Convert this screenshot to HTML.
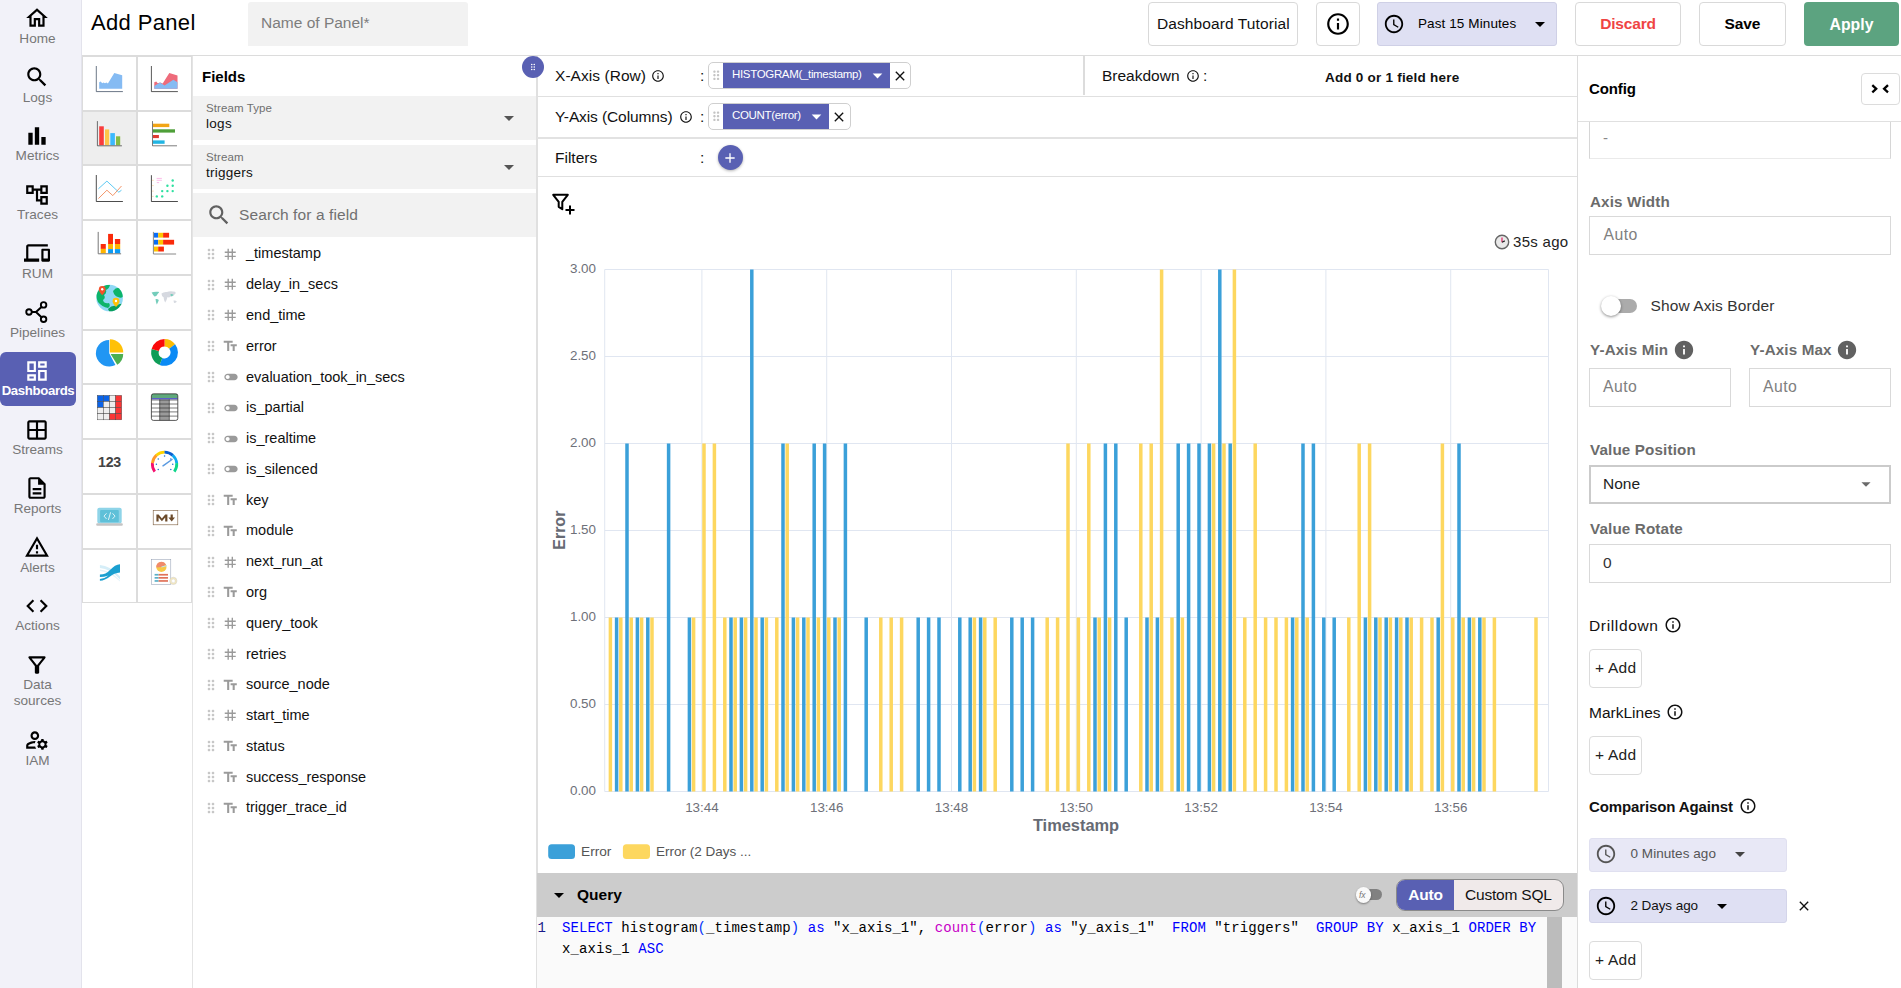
<!DOCTYPE html>
<html lang="en">
<head>
<meta charset="utf-8">
<title>Add Panel</title>
<style>
*{box-sizing:border-box;margin:0;padding:0}
html,body{width:1901px;height:988px;overflow:hidden;background:#fff}
body{font-family:"Liberation Sans",sans-serif;color:#000;position:relative;font-size:14px}
.abs{position:absolute}
svg{display:block}
.t{position:absolute;white-space:nowrap;line-height:1}

/* sidebar */
#side{position:absolute;left:0;top:0;width:82px;height:988px;background:#f2f2f9;border-right:1px solid #e3e3ec}
.nav{position:absolute;left:0;width:76px;text-align:center;color:#7a7a7a;font-size:14.5px;line-height:17px}
.nav svg{position:absolute;left:25px;top:0;width:24px;height:24px;fill:#000}
.nav .lb{position:absolute;left:0;width:75px;top:24px;text-align:center}
.nav.act{background:#5960b2;border-radius:0 8px 8px 0;color:#fff;font-weight:bold}
.nav.act svg{fill:#fff}

/* header */
#hdr{position:absolute;left:82px;top:0;width:1819px;height:56px;border-bottom:1px solid #dcdcdc;background:#fff}
.btn{position:absolute;border:1px solid #d9d9d9;border-radius:4px;background:#fff;text-align:center;white-space:nowrap}

/* chart types */
#ctypes{position:absolute;left:82px;top:56px;width:111px;height:932px;border-right:2px solid #e0e0e0}
.ct{position:absolute;width:55px;height:55px;border:1px solid #dcdcdc;background:#fff}
.ct svg{position:absolute;left:13px;top:13px;width:28px;height:28px}

/* fields */
#fields{position:absolute;left:193px;top:56px;width:343px;height:932px;background:#fff}
.sel{position:absolute;left:0;width:343px;height:44px;background:#f2f2f2}
.sel .l1{position:absolute;left:13px;top:6px;font-size:11.5px;color:#757575;line-height:12px}
.sel .l2{position:absolute;left:13px;top:21px;font-size:13.5px;color:#111;line-height:15px}
.fr{position:absolute;left:0;width:343px;height:20px}
.fr .nm{position:absolute;left:52px;top:2px;font-size:14px;line-height:16px;color:#111;white-space:nowrap;letter-spacing:.1px}
.fr svg{position:absolute}

/* main */
#main{position:absolute;left:537px;top:56px;width:1041px;height:932px;border-left:1px solid #e0e0e0}

/* config */
#cfg{position:absolute;left:1577px;top:56px;width:324px;height:932px;border-left:2px solid #e6e6e6;background:#fff}
.inp{position:absolute;border:1px solid #d9d9d9;background:#fff;border-radius:0}
.lab{position:absolute;font-weight:bold;color:#6b6b6b;font-size:15.2px;letter-spacing:.15px;white-space:nowrap;line-height:16px}
.ph{position:absolute;color:#808080;font-size:15.8px;letter-spacing:.45px;white-space:nowrap;line-height:16px}
</style>
</head>
<body>

<div id="side">
<div class="abs" style="left:23.8px;top:5.3px"><svg viewBox="0 0 24 24" width="26" height="26" fill="#000"><path d="M12 5.69l5 4.5V18h-2v-6H9v6H7v-7.81l5-4.5M12 3L2 12h3v8h6v-6h2v6h6v-8h3L12 3z"/></svg></div>
<div class="t" style="left:0;width:75px;text-align:center;top:30.8px;font-size:13.6px;color:#777;line-height:15.5px;white-space:normal">Home</div>
<div class="abs" style="left:23.8px;top:64.0px"><svg viewBox="0 0 24 24" width="26" height="26" fill="#000"><path d="M15.5 14h-.79l-.28-.27C15.41 12.59 16 11.11 16 9.5 16 5.91 13.09 3 9.5 3S3 5.91 3 9.5 5.91 16 9.5 16c1.61 0 3.09-.59 4.23-1.57l.27.28v.79l5 4.99L20.49 19l-4.99-5zm-6 0C7.01 14 5 11.99 5 9.5S7.01 5 9.5 5 14 7.01 14 9.5 11.99 14 9.5 14z"/></svg></div>
<div class="t" style="left:0;width:75px;text-align:center;top:89.5px;font-size:13.6px;color:#777;line-height:15.5px;white-space:normal">Logs</div>
<div class="abs" style="left:23.8px;top:122.8px"><svg viewBox="0 0 24 24" width="26" height="26" fill="#000"><path d="M4 9h4v11H4zM16 13h4v7h-4zM10 4h4v16h-4z"/></svg></div>
<div class="t" style="left:0;width:75px;text-align:center;top:148.3px;font-size:13.6px;color:#777;line-height:15.5px;white-space:normal">Metrics</div>
<div class="abs" style="left:23.8px;top:181.6px"><svg viewBox="0 0 24 24" width="26" height="26" fill="#000"><path d="M22 11V3h-7v3H9V3H2v8h7V8h2v10h4v3h7v-8h-7v3h-2V8h2v3h7zM7 9H4V5h3v4zm10 6h3v4h-3v-4zm0-10h3v4h-3V5z"/></svg></div>
<div class="t" style="left:0;width:75px;text-align:center;top:207.1px;font-size:13.6px;color:#777;line-height:15.5px;white-space:normal">Traces</div>
<div class="abs" style="left:23.8px;top:240.3px"><svg viewBox="0 0 24 24" width="26" height="26" fill="#000"><path d="M4 6h18V4H4c-1.1 0-2 .9-2 2v11H0v3h14v-3H4V6zm19 2h-6c-.55 0-1 .45-1 1v10c0 .55.45 1 1 1h6c.55 0 1-.45 1-1V9c0-.55-.45-1-1-1zm-1 9h-4v-7h4v7z"/></svg></div>
<div class="t" style="left:0;width:75px;text-align:center;top:265.8px;font-size:13.6px;color:#777;line-height:15.5px;white-space:normal">RUM</div>
<div class="abs" style="left:23.8px;top:299.1px"><svg viewBox="0 0 26 26" width="26" height="26" fill="none" stroke="#000"><circle cx="5" cy="13" r="2.750" stroke-width="1.900"/><circle cx="19.600" cy="5.900" r="2.750" stroke-width="1.900"/><circle cx="19.600" cy="20.300" r="2.750" stroke-width="1.900"/><path d="M7.700 13H12M17.500 7.900L12 13L17.500 18.300" stroke-width="2" stroke-linejoin="round"/></svg></div>
<div class="t" style="left:0;width:75px;text-align:center;top:324.6px;font-size:13.6px;color:#777;line-height:15.5px;white-space:normal">Pipelines</div>
<div class="abs" style="left:0;top:352px;width:76px;height:54px;background:#5960b3;border-radius:6px"></div>
<div class="abs" style="left:23.8px;top:357.8px"><svg viewBox="0 0 24 24" width="26" height="26" fill="#fff"><path d="M19 5v2h-4V5h4M9 5v6H5V5h4m10 8v6h-4v-6h4M9 17v2H5v-2h4M21 3h-8v6h8V3zM11 3H3v10h8V3zm10 8h-8v10h8V11zm-10 4H3v6h8v-6z"/></svg></div>
<div class="t" style="left:0;width:76px;text-align:center;top:384.3px;font-size:13.2px;font-weight:bold;color:#fff;letter-spacing:-.35px">Dashboards</div>
<div class="abs" style="left:23.8px;top:416.6px"><svg viewBox="0 0 24 24" width="26" height="26" fill="#000"><path d="M5 21q-.825 0-1.413-.587T3 19V5q0-.825.588-1.413T5 3h14q.825 0 1.413.588T21 5v14q0 .825-.587 1.413T19 21H5Zm8-8v6h6v-6h-6Zm0-2h6V5h-6v6Zm-2 0V5H5v6h6Zm0 2H5v6h6v-6Z"/></svg></div>
<div class="t" style="left:0;width:75px;text-align:center;top:442.1px;font-size:13.6px;color:#777;line-height:15.5px;white-space:normal">Streams</div>
<div class="abs" style="left:23.8px;top:475.3px"><svg viewBox="0 0 24 24" width="26" height="26" fill="#000"><path d="M8 16h8v2H8zm0-4h8v2H8zm6-10H6c-1.1 0-2 .9-2 2v16c0 1.1.89 2 1.99 2H18c1.1 0 2-.9 2-2V8l-6-6zm4 18H6V4h7v5h5v11z"/></svg></div>
<div class="t" style="left:0;width:75px;text-align:center;top:500.8px;font-size:13.6px;color:#777;line-height:15.5px;white-space:normal">Reports</div>
<div class="abs" style="left:23.8px;top:534.0px"><svg viewBox="0 0 24 24" width="26" height="26" fill="#000"><path d="M12 5.99L19.53 19H4.47L12 5.99M12 2L1 21h22L12 2zm1 14h-2v2h2v-2zm0-6h-2v4h2v-4z"/></svg></div>
<div class="t" style="left:0;width:75px;text-align:center;top:559.5px;font-size:13.6px;color:#777;line-height:15.5px;white-space:normal">Alerts</div>
<div class="abs" style="left:23.8px;top:592.8px"><svg viewBox="0 0 24 24" width="26" height="26" fill="#000"><path d="M9.4 16.6L4.8 12l4.6-4.6L8 6l-6 6 6 6 1.4-1.4zm5.2 0l4.6-4.6-4.6-4.6L16 6l6 6-6 6-1.4-1.4z"/></svg></div>
<div class="t" style="left:0;width:75px;text-align:center;top:618.3px;font-size:13.6px;color:#777;line-height:15.5px;white-space:normal">Actions</div>
<div class="abs" style="left:23.8px;top:651.5px"><svg viewBox="0 0 24 24" width="26" height="26" fill="#000"><path d="M7 6h10l-5.01 6.3L7 6zm-2.75-.39C6.27 8.2 10 13 10 13v6c0 .55.45 1 1 1h2c.55 0 1-.45 1-1v-6s3.72-4.8 5.74-7.39C20.25 4.95 19.78 4 18.95 4H5.04c-.83 0-1.3.95-.79 1.61z"/></svg></div>
<div class="t" style="left:0;width:75px;text-align:center;top:677.0px;font-size:13.6px;color:#777;line-height:15.5px;white-space:normal">Data<br>sources</div>
<div class="abs" style="left:23.8px;top:727.0px"><svg viewBox="0 0 24 24" width="26" height="26" fill="#000"><path d="M4 18v-.65c0-.34.16-.66.41-.81C6.1 15.53 8.03 15 10 15c.03 0 .05 0 .08.01.1-.7.3-1.37.59-1.98-.22-.02-.44-.03-.67-.03-2.42 0-4.68.67-6.61 1.82-.88.52-1.39 1.5-1.39 2.53V20h9.26c-.42-.6-.75-1.28-.97-2H4zM10 12c2.21 0 4-1.79 4-4s-1.790-4-4-4-4 1.790-4 4 1.790 4 4 4zm0-6c1.100 0 2 .9 2 2s-.9 2-2 2-2-.9-2-2 .9-2 2-2zM20.750 16c0-.22-.03-.42-.06-.63l1.140-1.010-1-1.730-1.450.490c-.32-.27-.68-.48-1.080-.63L18 11h-2l-.3 1.490c-.4.15-.76.36-1.080.63l-1.450-.490-1 1.730 1.140 1.010c-.03.21-.06.41-.06.63s.03.42.06.63l-1.140 1.010 1 1.730 1.450-.490c.32.27.68.48 1.080.63L16 21h2l.3-1.490c.4-.15.76-.36 1.080-.63l1.450.490 1-1.730-1.140-1.010c.03-.21.06-.41.06-.63zM17 18c-1.100 0-2-.9-2-2s.9-2 2-2 2 .9 2 2-.9 2-2 2z"/></svg></div>
<div class="t" style="left:0;width:75px;text-align:center;top:752.5px;font-size:13.6px;color:#777;line-height:15.5px;white-space:normal">IAM</div>
</div>
<div id="hdr">
<div class="t" style="left:9px;top:12px;font-size:22px;letter-spacing:.35px;color:#000">Add Panel</div>
<div class="abs" style="left:166px;top:2px;width:220px;height:44px;background:#f2f2f2;border-radius:3px 3px 0 0"></div>
<div class="t" style="left:179px;top:15px;font-size:15.5px;color:#7d7d7d">Name of Panel*</div>
<div class="btn" style="left:1066px;top:2px;width:150px;height:44px"></div>
<div class="t" style="left:1075px;top:16px;font-size:15.5px;color:#111;letter-spacing:.1px">Dashboard Tutorial</div>
<div class="btn" style="left:1234px;top:2px;width:44px;height:44px"></div>
<div class="abs" style="left:1243px;top:11px"><svg viewBox="0 0 24 24" width="26" height="26" fill="#000"><path d="M11 7h2v2h-2zm0 4h2v6h-2zm1-9C6.48 2 2 6.48 2 12s4.48 10 10 10 10-4.48 10-10S17.52 2 12 2zm0 18c-4.41 0-8-3.59-8-8s3.59-8 8-8 8 3.59 8 8-3.59 8-8 8z"/></svg></div>
<div class="abs" style="left:1295px;top:2px;width:180px;height:44px;background:#dfe0f3;border:1px solid #cfd0e6;border-radius:3px"></div>
<div class="abs" style="left:1301px;top:13px"><svg viewBox="0 0 24 24" width="22" height="22" fill="#000"><path d="M11.99 2C6.47 2 2 6.48 2 12s4.47 10 9.99 10C17.52 22 22 17.52 22 12S17.52 2 11.99 2zM12 20c-4.42 0-8-3.58-8-8s3.58-8 8-8 8 3.58 8 8-3.58 8-8 8zm.5-13H11v6l5.250 3.150.75-1.230-4.5-2.670z"/></svg></div>
<div class="t" style="left:1336px;top:17px;font-size:13.5px;color:#000;letter-spacing:.1px">Past 15 Minutes</div>
<div class="abs" style="left:1446px;top:12px"><svg viewBox="0 0 24 24" width="24" height="24" fill="#000"><path d="M7 10l5 5 5-5z"/></svg></div>
<div class="btn" style="left:1493px;top:2px;width:106px;height:44px"></div>
<div class="t" style="left:1493px;width:106px;text-align:center;top:16px;font-size:15.5px;color:#ef4444;font-weight:bold;letter-spacing:-.2px">Discard</div>
<div class="btn" style="left:1617px;top:2px;width:87px;height:44px"></div>
<div class="t" style="left:1617px;width:87px;text-align:center;top:16px;font-size:15.5px;color:#000;font-weight:bold;letter-spacing:-.1px">Save</div>
<div class="abs" style="left:1722px;top:2px;width:95px;height:44px;background:#5ca380;border-radius:4px"></div>
<div class="t" style="left:1722px;width:95px;text-align:center;top:16.500px;font-size:15.800px;color:#fff;font-weight:bold">Apply</div>
</div>
<div id="ctypes" class="abs" style="left:82px;top:56px;width:112px;height:932px">
<div class="abs" style="left:110px;top:0;width:2px;height:932px;background:#e4e4e4"></div>
<div class="abs" style="left:0px;top:-0.1px;width:55px;height:54.8px;border:1px solid #dcdcdc;background:#fff"><svg viewBox="0 0 55 55" width="55" height="55" style="position:absolute;left:-1px;top:-1px;overflow:visible"><polygon points="17.2,26.3 18.7,25.5 20.2,27.2 21.5,26.4 23,27.2 24.4,26.6 25.9,27.6 32.3,17 40.2,19.3 40.2,32.7 17.2,32.7" fill="#85bbf3"/><path d="M14.3 10V35.6H40.9" fill="none" stroke="#3b4a5f" stroke-width="0.75"/></svg></div>
<div class="abs" style="left:55px;top:-0.1px;width:55px;height:54.8px;border:1px solid #dcdcdc;background:#fff"><svg viewBox="0 0 55 55" width="55" height="55" style="position:absolute;left:-1px;top:-1px;overflow:visible"><polygon points="17.3,26.3 19.3,25.5 20.7,27.2 23.2,26.6 25.7,27.6 32.3,17 40.5,19.5 40.5,32.7 17.3,32.7" fill="#ee6b7b"/><polygon points="17.3,30 23,26.6 27.6,29.5 36.3,23.8 40.5,26.3 40.5,32.7 17.3,32.7" fill="#85bbf3"/><path d="M14.4 10V35.6H40.9" fill="none" stroke="#222" stroke-width="0.75"/></svg></div>
<div class="abs" style="left:0px;top:54.6px;width:55px;height:54.8px;border:1px solid #dcdcdc;background:#eeeeee"><svg viewBox="0 0 55 55" width="55" height="55" style="position:absolute;left:-1px;top:-1px;overflow:visible"><rect x="17.2" y="15.3" width="4.6" height="18.9" fill="#f93c3c"/><rect x="23" y="18.4" width="4.2" height="15.8" fill="#fdc54a"/><rect x="28.3" y="22.1" width="4.6" height="12.1" fill="#3bb9fc"/><rect x="34" y="25.3" width="4.2" height="8.9" fill="#85bb43"/><path d="M15.4 10.1V34.8H39.9" fill="none" stroke="#333" stroke-width="0.7"/></svg></div>
<div class="abs" style="left:55px;top:54.6px;width:55px;height:54.8px;border:1px solid #dcdcdc;background:#fff"><svg viewBox="0 0 55 55" width="55" height="55" style="position:absolute;left:-1px;top:-1px;overflow:visible"><rect x="15.9" y="12.7" width="16.4" height="3.4" fill="#f2a516"/><rect x="15.9" y="18.3" width="22.1" height="3.3" fill="#4e9f38"/><rect x="15.9" y="24" width="6" height="3.1" fill="#e03c31"/><rect x="15.9" y="29.4" width="11.7" height="3.4" fill="#21b5e3"/><path d="M15.5 10.1V34.8H40" fill="none" stroke="#444" stroke-width="0.7"/></svg></div>
<div class="abs" style="left:0px;top:109.4px;width:55px;height:54.8px;border:1px solid #dcdcdc;background:#fff"><svg viewBox="0 0 55 55" width="55" height="55" style="position:absolute;left:-1px;top:-1px;overflow:visible"><polyline points="16.4,23.8 24.9,16.1 36.8,27.2 39.5,25.2" fill="none" stroke="#4cc3f1" stroke-width=".9"/><polyline points="16.4,33.6 24.9,25.2 30.8,30.6 39.5,21" fill="none" stroke="#f28b5a" stroke-width=".9"/><path d="M14.3 10V36.5H40.9" fill="none" stroke="#111" stroke-width="0.75"/></svg></div>
<div class="abs" style="left:55px;top:109.4px;width:55px;height:54.8px;border:1px solid #dcdcdc;background:#fff"><svg viewBox="0 0 55 55" width="55" height="55" style="position:absolute;left:-1px;top:-1px;overflow:visible"><path d="M19.6 13.4H24.9M19.6 15.3H24.9M19.8 17.6H22.1" stroke="#f9a0de" stroke-width=".7" fill="none"/><circle cx="35.7" cy="15.5" r="1.2" fill="#2de0a0"/><circle cx="30.4" cy="20.7" r="1.2" fill="#2de0a0"/><circle cx="35.7" cy="20.7" r="1.2" fill="#2de0a0"/><circle cx="25.2" cy="26.1" r="1.2" fill="#2de0a0"/><circle cx="30.4" cy="26.1" r="1.2" fill="#2de0a0"/><circle cx="35.7" cy="26.1" r="1.2" fill="#2de0a0"/><circle cx="19.8" cy="31.4" r="1.2" fill="#2de0a0"/><circle cx="25.2" cy="31.4" r="1.2" fill="#2de0a0"/><path d="M15.1 15.3H16.7" stroke="#f7b267" stroke-width=".5"/><path d="M15.1 20.6H16.7" stroke="#f7b267" stroke-width=".5"/><path d="M15.1 26.1H16.7" stroke="#f7b267" stroke-width=".5"/><path d="M15.1 31.4H16.7" stroke="#f7b267" stroke-width=".5"/><path d="M14.4 10.2V36.5H40.9" fill="none" stroke="#111" stroke-width="0.75"/></svg></div>
<div class="abs" style="left:0px;top:164.2px;width:55px;height:54.8px;border:1px solid #dcdcdc;background:#fff"><svg viewBox="0 0 55 55" width="55" height="55" style="position:absolute;left:-1px;top:-1px;overflow:visible"><rect x="18.7" y="24" width="5.1" height="4.9" fill="#fa2a0a"/><rect x="18.7" y="28.9" width="5.1" height="4.5" fill="#ffb400"/><rect x="26.1" y="13.9" width="4.9" height="10.1" fill="#fa2a0a"/><rect x="26.1" y="24" width="4.9" height="5.1" fill="#ffb400"/><rect x="26.1" y="29.1" width="4.9" height="4.3" fill="#0a9bf5"/><rect x="32.9" y="19" width="5.3" height="5" fill="#fa2a0a"/><rect x="32.9" y="24" width="5.3" height="5.1" fill="#ffb400"/><rect x="32.9" y="29.1" width="5.3" height="4.3" fill="#0a9bf5"/><path d="M16.2 11.9V33.8H39.1" fill="none" stroke="#777" stroke-width="1"/></svg></div>
<div class="abs" style="left:55px;top:164.2px;width:55px;height:54.8px;border:1px solid #dcdcdc;background:#fff"><svg viewBox="0 0 55 55" width="55" height="55" style="position:absolute;left:-1px;top:-1px;overflow:visible"><rect x="16.8" y="12.8" width="4.4" height="4.8" fill="#0a6cf5"/><rect x="21.2" y="12.8" width="4.9" height="4.8" fill="#ffc400"/><rect x="26.1" y="12.8" width="6" height="4.8" fill="#fa2a0a"/><rect x="16.8" y="19.8" width="4.4" height="4.8" fill="#0a6cf5"/><rect x="21.2" y="19.8" width="4.9" height="4.8" fill="#ffc400"/><rect x="26.1" y="19.8" width="11" height="4.8" fill="#fa2a0a"/><rect x="16.8" y="26.6" width="4.4" height="4.9" fill="#ffc400"/><rect x="21.2" y="26.6" width="5.7" height="4.9" fill="#fa2a0a"/><path d="M16.4 11.9V34H39.1" fill="none" stroke="#888" stroke-width="1"/></svg></div>
<div class="abs" style="left:0px;top:218.9px;width:55px;height:54.8px;border:1px solid #dcdcdc;background:#fff"><svg viewBox="0 0 55 55" width="55" height="55" style="position:absolute;left:-1px;top:-1px;overflow:visible"><clipPath id="gl"><circle cx="27.6" cy="23" r="13.3"/></clipPath><circle cx="27.6" cy="23" r="13.3" fill="#8fd8f5"/><g clip-path="url(#gl)" fill="#0cb46a"><path d="M14 14 Q20 8 28 10 Q27 14 24 15 Q25 18 22 20 Q24 23 21 25 Q22 29 27 28 Q29 31 26 33 Q20 32 16 27 Q13 20 14 14Z"/><path d="M31 16 Q34 12 38 13 L42 20 Q40 24 36 22 Q32 21 31 16Z"/><path d="M26 34 Q30 30 34 31 Q38 28 41 29 L38 36 L28 38Z" fill="#0a9e5c"/></g><path d="M20.2 20.2 Q16.8 16.5 16.8 14.4 A3.4 3.4 0 1 1 23.6 14.4 Q23.6 16.5 20.2 20.2Z" fill="#f4502a"/><circle cx="20.2" cy="14.2" r="1.2" fill="#fff"/><path d="M34 32 Q30.6 28.3 30.6 26.2 A3.4 3.4 0 1 1 37.400 26.2 Q37.4 28.3 34 32Z" fill="#ffc107"/><circle cx="34" cy="26" r="1.2" fill="#fff"/></svg></div>
<div class="abs" style="left:55px;top:218.9px;width:55px;height:54.8px;border:1px solid #dcdcdc;background:#fff"><svg viewBox="0 0 55 55" width="55" height="55" style="position:absolute;left:-1px;top:-1px;overflow:visible"><g opacity=".85"><path d="M14.6 17.5 Q17 16.400 21.500 16.800 Q23 17.500 21 18.500 Q20 21 17.500 21.500 Q16 20 14.600 17.500Z" fill="#5cc5b0"/><path d="M18.500 24 Q20.500 23.600 21.800 25 Q21 27.500 19.800 29.500 Q18.800 27 18.500 24Z" fill="#5cc5b0"/><path d="M24.500 18.500 Q27 16.500 30 17 Q33 15.800 38 16.800 Q39.500 18 37.500 19.500 Q36 22 33.500 21.500 Q32 23 30.500 22 Q29.500 26 28.200 27.500 Q26.500 25 26.800 22.500 Q24.500 21.500 24.500 18.500Z" fill="#cfd3db"/><path d="M33.500 19 Q35.500 18.500 36.500 20 Q35.500 21.500 33.800 21 Z" fill="#5cc5b0"/><path d="M36.500 25.500 Q38.500 25 39.800 26.500 Q39 28.200 37 27.800Z" fill="#cfd3db"/></g></svg></div>
<div class="abs" style="left:0px;top:273.6px;width:55px;height:54.8px;border:1px solid #dcdcdc;background:#fff"><svg viewBox="0 0 55 55" width="55" height="55" style="position:absolute;left:-1px;top:-1px;overflow:visible"><path d="M27.2 23.3L33.44 35.04A13.3 13.3 0 1 1 27.20 10.00Z" fill="#2196f3"/><path d="M27.9 22.5L27.90 9.20A13.3 13.3 0 0 1 41.20 22.50Z" fill="#ffc107"/><path d="M28.6 24L41.20 24.00A12.6 12.6 0 0 1 35.28 34.69Z" fill="#4caf50"/></svg></div>
<div class="abs" style="left:55px;top:273.6px;width:55px;height:54.8px;border:1px solid #dcdcdc;background:#fff"><svg viewBox="0 0 55 55" width="55" height="55" style="position:absolute;left:-1px;top:-1px;overflow:visible"><path d="M27.55 12.80A9.65 9.65 0 0 1 35.15 16.51" fill="none" stroke="#fbbc05" stroke-width="7.5"/><path d="M35.15 16.51A9.65 9.65 0 0 1 23.94 31.40" fill="none" stroke="#0a8af5" stroke-width="7.5"/><path d="M23.94 31.40A9.65 9.65 0 0 1 18.23 19.95" fill="none" stroke="#0f9d58" stroke-width="7.5"/><path d="M18.23 19.95A9.65 9.65 0 0 1 27.55 12.80" fill="none" stroke="#fa0a0a" stroke-width="7.5"/></svg></div>
<div class="abs" style="left:0px;top:328.4px;width:55px;height:54.8px;border:1px solid #dcdcdc;background:#fff"><svg viewBox="0 0 55 55" width="55" height="55" style="position:absolute;left:-1px;top:-1px;overflow:visible"><rect x="15.30" y="11.40" width="6.1" height="6.1" fill="#0a63e8" stroke="#444" stroke-width=".45"/><rect x="21.40" y="11.40" width="6.1" height="6.1" fill="#0a63e8" stroke="#444" stroke-width=".45"/><rect x="27.50" y="11.40" width="6.1" height="6.1" fill="#eeeeee" stroke="#444" stroke-width=".45"/><rect x="33.60" y="11.40" width="6.1" height="6.1" fill="#fa3535" stroke="#444" stroke-width=".45"/><rect x="15.30" y="17.50" width="6.1" height="6.1" fill="#0a63e8" stroke="#444" stroke-width=".45"/><rect x="21.40" y="17.50" width="6.1" height="6.1" fill="#eeeeee" stroke="#444" stroke-width=".45"/><rect x="27.50" y="17.50" width="6.1" height="6.1" fill="#eeeeee" stroke="#444" stroke-width=".45"/><rect x="33.60" y="17.50" width="6.1" height="6.1" fill="#fa3535" stroke="#444" stroke-width=".45"/><rect x="15.30" y="23.60" width="6.1" height="6.1" fill="#eeeeee" stroke="#444" stroke-width=".45"/><rect x="21.40" y="23.60" width="6.1" height="6.1" fill="#eeeeee" stroke="#444" stroke-width=".45"/><rect x="27.50" y="23.60" width="6.1" height="6.1" fill="#eeeeee" stroke="#444" stroke-width=".45"/><rect x="33.60" y="23.60" width="6.1" height="6.1" fill="#fa3535" stroke="#444" stroke-width=".45"/><rect x="15.30" y="29.70" width="6.1" height="6.1" fill="#eeeeee" stroke="#444" stroke-width=".45"/><rect x="21.40" y="29.70" width="6.1" height="6.1" fill="#eeeeee" stroke="#444" stroke-width=".45"/><rect x="27.50" y="29.70" width="6.1" height="6.1" fill="#fa3535" stroke="#444" stroke-width=".45"/><rect x="33.60" y="29.70" width="6.1" height="6.1" fill="#fa3535" stroke="#444" stroke-width=".45"/></svg></div>
<div class="abs" style="left:55px;top:328.4px;width:55px;height:54.8px;border:1px solid #dcdcdc;background:#fff"><svg viewBox="0 0 55 55" width="55" height="55" style="position:absolute;left:-1px;top:-1px;overflow:visible"><clipPath id="tb"><rect x="14.4" y="9.8" width="26.4" height="26.6" rx="2"/></clipPath><g clip-path="url(#tb)"><rect x="14.4" y="9.800" width="26.400" height="26.600" fill="#fff"/><rect x="22.7" y="15.4" width="9.6" height="21" fill="#9a9a9a"/><rect x="14.4" y="9.800" width="26.400" height="4.200" fill="#5fa87b"/><rect x="14.4" y="14" width="26.400" height="1.400" fill="#5b5fc7"/><path d="M14.4 16H40.800M14.4 20H40.800M14.4 24H40.800M14.4 27.900H40.800M14.4 32.100H40.800M22.700 15.400V36.400M32.300 15.400V36.400" stroke="#222" stroke-width=".6" fill="none"/></g><rect x="14.4" y="9.8" width="26.4" height="26.6" rx="2" fill="none" stroke="#111" stroke-width=".7"/></svg></div>
<div class="abs" style="left:0px;top:383.1px;width:55px;height:54.8px;border:1px solid #dcdcdc;background:#fff"><svg viewBox="0 0 55 55" width="55" height="55" style="position:absolute;left:-1px;top:-1px;overflow:visible"><text x="27.500" y="28.100" text-anchor="middle" font-family="Liberation Sans, sans-serif" font-weight="bold" font-size="14.2" fill="#444" letter-spacing="-.3">123</text></svg></div>
<div class="abs" style="left:55px;top:383.1px;width:55px;height:54.8px;border:1px solid #dcdcdc;background:#fff"><svg viewBox="0 0 55 55" width="55" height="55" style="position:absolute;left:-1px;top:-1px;overflow:visible"><path d="M17.74 32.56A12.2 12.2 0 0 1 15.42 24.02" fill="none" stroke="#f5106e" stroke-width="2.8"/><path d="M15.40 24.24A12.2 12.2 0 0 1 19.55 16.09" fill="none" stroke="#ff9a2a" stroke-width="2.8"/><path d="M19.39 16.23A12.2 12.2 0 0 1 27.76 13.10" fill="none" stroke="#ffd500" stroke-width="2.8"/><path d="M27.55 13.10A12.2 12.2 0 0 1 35.87 16.38" fill="none" stroke="#0a5fd0" stroke-width="2.8"/><path d="M35.71 16.23A12.2 12.2 0 0 1 39.72 24.45" fill="none" stroke="#10aaf0" stroke-width="2.8"/><path d="M39.70 24.24A12.2 12.2 0 0 1 37.32 32.61" fill="none" stroke="#0fd68a" stroke-width="2.8"/><circle cx="21.27" cy="30.57" r=".75" fill="#1a6fd0"/><circle cx="19.35" cy="25.30" r=".75" fill="#1a6fd0"/><circle cx="21.27" cy="20.03" r=".75" fill="#1a6fd0"/><circle cx="27.55" cy="17.10" r=".75" fill="#1a6fd0"/><circle cx="33.83" cy="20.03" r=".75" fill="#1a6fd0"/><circle cx="35.75" cy="25.30" r=".75" fill="#1a6fd0"/><circle cx="33.83" cy="30.57" r=".75" fill="#1a6fd0"/><path d="M26 26.800L35 20.500" stroke="#5a9ae0" stroke-width="1.500" stroke-linecap="round"/></svg></div>
<div class="abs" style="left:0px;top:437.9px;width:55px;height:54.8px;border:1px solid #dcdcdc;background:#fff"><svg viewBox="0 0 55 55" width="55" height="55" style="position:absolute;left:-1px;top:-1px;overflow:visible"><rect x="15.3" y="13.8" width="24.4" height="15.7" rx="2" fill="#8fd4e8"/><rect x="18.1" y="15.9" width="18.7" height="12.4" rx="1" fill="#5fc0d8"/><rect x="14.2" y="29.3" width="26.6" height="2.4" rx="1" fill="#c4c4c4"/><path d="M24.500 19.300L22 22.100L24.500 24.900M30.500 19.300L33 22.100L30.500 24.900M28.600 18.300L26.400 25.900" fill="none" stroke="#fff" stroke-width=".8"/></svg></div>
<div class="abs" style="left:55px;top:437.9px;width:55px;height:54.8px;border:1px solid #dcdcdc;background:#fff"><svg viewBox="0 0 55 55" width="55" height="55" style="position:absolute;left:-1px;top:-1px;overflow:visible"><rect x="16.2" y="16.4" width="24.6" height="14.4" fill="#fff" stroke="#7a5a3a" stroke-width=".6"/><path d="M19.400 27.400V20.400H21.600L24.900 24.400L28.200 20.400H30.400V27.400H28.200V23.400L24.900 27.300L21.600 23.400V27.400Z" fill="#6b4a2a"/><path d="M33.600 20.400H35.800V23.600H38L34.700 27.500L31.400 23.600H33.600Z" fill="#6b4a2a"/></svg></div>
<div class="abs" style="left:0px;top:492.6px;width:55px;height:54.8px;border:1px solid #dcdcdc;background:#fff"><svg viewBox="0 0 55 55" width="55" height="55" style="position:absolute;left:-1px;top:-1px;overflow:visible"><path d="M17.900 16 Q28 16.500 38 27.500 V30.500 Q28 19.500 17.900 19Z" fill="#d6eef8"/><path d="M17.900 20.500 Q28 21 38 31.500 V32.500 Q28 23 17.900 22Z" fill="#e3f3fa"/><path d="M17.900 25.500 Q24 25.500 28 21 Q33 15.500 38 15.200 V23.500 Q32 24 28 27.500 Q23 31.500 17.900 31.800 V30 Q23 29.500 26.500 26.500 Q22 28 17.900 28Z" fill="#1a9fd0"/></svg></div>
<div class="abs" style="left:55px;top:492.6px;width:55px;height:54.8px;border:1px solid #dcdcdc;background:#fff"><svg viewBox="0 0 55 55" width="55" height="55" style="position:absolute;left:-1px;top:-1px;overflow:visible"><rect x="14.4" y="10.7" width="19.4" height="24.600" fill="#fff" stroke="#8b98ad" stroke-width=".5"/><circle cx="24.400" cy="18" r="5.100" fill="#f7c948"/><path d="M24.4 18L19.32 18.44A5.1 5.1 0 0 1 29.02 15.84Z" fill="#f08a6c"/><path d="M24.400 18L30 16.600" stroke="#bfe3ef" stroke-width="1"/><rect x="17.600" y="24.900" width="4" height="1.700" fill="#5ab0c8"/><rect x="21.600" y="24.900" width="9.400" height="1.700" fill="#e0735a"/><rect x="17.600" y="28" width="4" height="1.700" fill="#5ab0c8"/><rect x="21.600" y="28" width="9.400" height="1.700" fill="#e0735a"/><rect x="17.600" y="31.100" width="4" height="1.700" fill="#5ab0c8"/><rect x="21.600" y="31.100" width="9.400" height="1.700" fill="#e0735a"/><circle cx="36.300" cy="31.900" r="2.700" fill="#fff" stroke="#f3e7c0" stroke-width="1.700"/><circle cx="36.300" cy="31.900" r="3.700" fill="none" stroke="#c0c0c0" stroke-width=".35"/><circle cx="36.300" cy="31.900" r="1.800" fill="none" stroke="#c8c8c8" stroke-width=".3"/></svg></div>
</div>
<div id="fields">
<div class="t" style="left:9px;top:13px;font-size:15px;font-weight:bold;color:#000">Fields</div>
<div class="abs" style="left:0;top:40px;width:343px;height:44px;background:#f2f2f2"></div>
<div class="t" style="left:13px;top:46.5px;font-size:11.5px;color:#6f6f6f;letter-spacing:.1px">Stream Type</div>
<div class="t" style="left:13px;top:61px;font-size:13.5px;color:#111;letter-spacing:.3px">logs</div>
<div class="abs" style="left:304px;top:50px"><svg viewBox="0 0 24 24" width="24" height="24" fill="#555"><path d="M7 10l5 5 5-5z"/></svg></div>
<div class="abs" style="left:0;top:89px;width:343px;height:44px;background:#f2f2f2"></div>
<div class="t" style="left:13px;top:95.5px;font-size:11.5px;color:#6f6f6f;letter-spacing:.1px">Stream</div>
<div class="t" style="left:13px;top:110px;font-size:13.5px;color:#111;letter-spacing:.25px">triggers</div>
<div class="abs" style="left:304px;top:99px"><svg viewBox="0 0 24 24" width="24" height="24" fill="#555"><path d="M7 10l5 5 5-5z"/></svg></div>
<div class="abs" style="left:0;top:137px;width:343px;height:44px;background:#f2f2f2"></div>
<div class="abs" style="left:13px;top:146px"><svg viewBox="0 0 24 24" width="26" height="26" fill="#616161"><path d="M15.5 14h-.79l-.28-.27C15.41 12.59 16 11.11 16 9.5 16 5.91 13.09 3 9.5 3S3 5.91 3 9.5 5.91 16 9.5 16c1.61 0 3.09-.59 4.23-1.57l.27.28v.79l5 4.99L20.49 19l-4.99-5zm-6 0C7.01 14 5 11.99 5 9.5S7.01 5 9.5 5 14 7.01 14 9.5 11.99 14 9.5 14z"/></svg></div>
<div class="t" style="left:46px;top:151px;font-size:15.5px;color:#707070;letter-spacing:.1px">Search for a field</div>
<div class="abs" style="left:10.400000000000006px;top:189.7px"><svg viewBox="0 0 24 24" width="16" height="16" fill="#c6c6c6"><path d="M11 18c0 1.100-.9 2-2 2s-2-.9-2-2 .9-2 2-2 2 .9 2 2zm-2-8c-1.100 0-2 .9-2 2s.9 2 2 2 2-.9 2-2-.9-2-2-2zm0-6c-1.100 0-2 .9-2 2s.9 2 2 2 2-.9 2-2-.9-2-2-2zm6 4c1.100 0 2-.9 2-2s-.9-2-2-2-2 .9-2 2 .9 2 2 2zm0 2c-1.100 0-2 .9-2 2s.9 2 2 2 2-.9 2-2-.9-2-2-2zm0 6c-1.100 0-2 .9-2 2s.9 2 2 2 2-.9 2-2-.9-2-2-2z"/></svg></div>
<div class="abs" style="left:29.349999999999994px;top:189.7px"><svg viewBox="0 0 24 24" width="16.5" height="16.5" fill="#9a9a9a"><path d="M20 10V8h-4V4h-2v4h-4V4H8v4H4v2h4v4H4v2h4v4h2v-4h4v4h2v-4h4v-2h-4v-4h4zm-6 4h-4v-4h4v4z"/></svg></div>
<div class="t" style="left:53px;top:190.4px;font-size:14.5px;color:#111">_timestamp</div>
<div class="abs" style="left:10.400000000000006px;top:220.5px"><svg viewBox="0 0 24 24" width="16" height="16" fill="#c6c6c6"><path d="M11 18c0 1.100-.9 2-2 2s-2-.9-2-2 .9-2 2-2 2 .9 2 2zm-2-8c-1.100 0-2 .9-2 2s.9 2 2 2 2-.9 2-2-.9-2-2-2zm0-6c-1.100 0-2 .9-2 2s.9 2 2 2 2-.9 2-2-.9-2-2-2zm6 4c1.100 0 2-.9 2-2s-.9-2-2-2-2 .9-2 2 .9 2 2 2zm0 2c-1.100 0-2 .9-2 2s.9 2 2 2 2-.9 2-2-.9-2-2-2zm0 6c-1.100 0-2 .9-2 2s.9 2 2 2 2-.9 2-2-.9-2-2-2z"/></svg></div>
<div class="abs" style="left:29.349999999999994px;top:220.4px"><svg viewBox="0 0 24 24" width="16.5" height="16.5" fill="#9a9a9a"><path d="M20 10V8h-4V4h-2v4h-4V4H8v4H4v2h4v4H4v2h4v4h2v-4h4v4h2v-4h4v-2h-4v-4h4zm-6 4h-4v-4h4v4z"/></svg></div>
<div class="t" style="left:53px;top:221.2px;font-size:14.5px;color:#111">delay_in_secs</div>
<div class="abs" style="left:10.400000000000006px;top:251.3px"><svg viewBox="0 0 24 24" width="16" height="16" fill="#c6c6c6"><path d="M11 18c0 1.100-.9 2-2 2s-2-.9-2-2 .9-2 2-2 2 .9 2 2zm-2-8c-1.100 0-2 .9-2 2s.9 2 2 2 2-.9 2-2-.9-2-2-2zm0-6c-1.100 0-2 .9-2 2s.9 2 2 2 2-.9 2-2-.9-2-2-2zm6 4c1.100 0 2-.9 2-2s-.9-2-2-2-2 .9-2 2 .9 2 2 2zm0 2c-1.100 0-2 .9-2 2s.9 2 2 2 2-.9 2-2-.9-2-2-2zm0 6c-1.100 0-2 .9-2 2s.9 2 2 2 2-.9 2-2-.9-2-2-2z"/></svg></div>
<div class="abs" style="left:29.349999999999994px;top:251.2px"><svg viewBox="0 0 24 24" width="16.5" height="16.5" fill="#9a9a9a"><path d="M20 10V8h-4V4h-2v4h-4V4H8v4H4v2h4v4H4v2h4v4h2v-4h4v4h2v-4h4v-2h-4v-4h4zm-6 4h-4v-4h4v4z"/></svg></div>
<div class="t" style="left:53px;top:252.0px;font-size:14.5px;color:#111">end_time</div>
<div class="abs" style="left:10.400000000000006px;top:282.0px"><svg viewBox="0 0 24 24" width="16" height="16" fill="#c6c6c6"><path d="M11 18c0 1.100-.9 2-2 2s-2-.9-2-2 .9-2 2-2 2 .9 2 2zm-2-8c-1.100 0-2 .9-2 2s.9 2 2 2 2-.9 2-2-.9-2-2-2zm0-6c-1.100 0-2 .9-2 2s.9 2 2 2 2-.9 2-2-.9-2-2-2zm6 4c1.100 0 2-.9 2-2s-.9-2-2-2-2 .9-2 2 .9 2 2 2zm0 2c-1.100 0-2 .9-2 2s.9 2 2 2 2-.9 2-2-.9-2-2-2zm0 6c-1.100 0-2 .9-2 2s.9 2 2 2 2-.9 2-2-.9-2-2-2z"/></svg></div>
<div class="abs" style="left:29.349999999999994px;top:282.0px"><svg viewBox="0 0 24 24" width="16.5" height="16.5" fill="#9a9a9a"><path d="M2.5 4v3h5v12h3V7h5V4h-13zm19 5h-9v3h3v7h3v-7h3V9z"/></svg></div>
<div class="t" style="left:53px;top:282.7px;font-size:14.5px;color:#111">error</div>
<div class="abs" style="left:10.400000000000006px;top:312.8px"><svg viewBox="0 0 24 24" width="16" height="16" fill="#c6c6c6"><path d="M11 18c0 1.100-.9 2-2 2s-2-.9-2-2 .9-2 2-2 2 .9 2 2zm-2-8c-1.100 0-2 .9-2 2s.9 2 2 2 2-.9 2-2-.9-2-2-2zm0-6c-1.100 0-2 .9-2 2s.9 2 2 2 2-.9 2-2-.9-2-2-2zm6 4c1.100 0 2-.9 2-2s-.9-2-2-2-2 .9-2 2 .9 2 2 2zm0 2c-1.100 0-2 .9-2 2s.9 2 2 2 2-.9 2-2-.9-2-2-2zm0 6c-1.100 0-2 .9-2 2s.9 2 2 2 2-.9 2-2-.9-2-2-2z"/></svg></div>
<div class="abs" style="left:29.599999999999994px;top:313.0px"><svg viewBox="0 0 24 24" width="16" height="16" fill="#9a9a9a"><path d="M17 7H7c-2.76 0-5 2.24-5 5s2.24 5 5 5h10c2.760 0 5-2.240 5-5s-2.240-5-5-5zM7 15c-1.660 0-3-1.340-3-3s1.340-3 3-3 3 1.340 3 3-1.340 3-3 3z"/></svg></div>
<div class="t" style="left:53px;top:313.5px;font-size:14.5px;color:#111">evaluation_took_in_secs</div>
<div class="abs" style="left:10.400000000000006px;top:343.6px"><svg viewBox="0 0 24 24" width="16" height="16" fill="#c6c6c6"><path d="M11 18c0 1.100-.9 2-2 2s-2-.9-2-2 .9-2 2-2 2 .9 2 2zm-2-8c-1.100 0-2 .9-2 2s.9 2 2 2 2-.9 2-2-.9-2-2-2zm0-6c-1.100 0-2 .9-2 2s.9 2 2 2 2-.9 2-2-.9-2-2-2zm6 4c1.100 0 2-.9 2-2s-.9-2-2-2-2 .9-2 2 .9 2 2 2zm0 2c-1.100 0-2 .9-2 2s.9 2 2 2 2-.9 2-2-.9-2-2-2zm0 6c-1.100 0-2 .9-2 2s.9 2 2 2 2-.9 2-2-.9-2-2-2z"/></svg></div>
<div class="abs" style="left:29.599999999999994px;top:343.8px"><svg viewBox="0 0 24 24" width="16" height="16" fill="#9a9a9a"><path d="M17 7H7c-2.76 0-5 2.24-5 5s2.24 5 5 5h10c2.760 0 5-2.240 5-5s-2.240-5-5-5zM7 15c-1.660 0-3-1.340-3-3s1.340-3 3-3 3 1.340 3 3-1.340 3-3 3z"/></svg></div>
<div class="t" style="left:53px;top:344.3px;font-size:14.5px;color:#111">is_partial</div>
<div class="abs" style="left:10.400000000000006px;top:374.4px"><svg viewBox="0 0 24 24" width="16" height="16" fill="#c6c6c6"><path d="M11 18c0 1.100-.9 2-2 2s-2-.9-2-2 .9-2 2-2 2 .9 2 2zm-2-8c-1.100 0-2 .9-2 2s.9 2 2 2 2-.9 2-2-.9-2-2-2zm0-6c-1.100 0-2 .9-2 2s.9 2 2 2 2-.9 2-2-.9-2-2-2zm6 4c1.100 0 2-.9 2-2s-.9-2-2-2-2 .9-2 2 .9 2 2 2zm0 2c-1.100 0-2 .9-2 2s.9 2 2 2 2-.9 2-2-.9-2-2-2zm0 6c-1.100 0-2 .9-2 2s.9 2 2 2 2-.9 2-2-.9-2-2-2z"/></svg></div>
<div class="abs" style="left:29.599999999999994px;top:374.6px"><svg viewBox="0 0 24 24" width="16" height="16" fill="#9a9a9a"><path d="M17 7H7c-2.76 0-5 2.24-5 5s2.24 5 5 5h10c2.760 0 5-2.240 5-5s-2.240-5-5-5zM7 15c-1.660 0-3-1.340-3-3s1.340-3 3-3 3 1.340 3 3-1.340 3-3 3z"/></svg></div>
<div class="t" style="left:53px;top:375.1px;font-size:14.5px;color:#111">is_realtime</div>
<div class="abs" style="left:10.400000000000006px;top:405.2px"><svg viewBox="0 0 24 24" width="16" height="16" fill="#c6c6c6"><path d="M11 18c0 1.100-.9 2-2 2s-2-.9-2-2 .9-2 2-2 2 .9 2 2zm-2-8c-1.100 0-2 .9-2 2s.9 2 2 2 2-.9 2-2-.9-2-2-2zm0-6c-1.100 0-2 .9-2 2s.9 2 2 2 2-.9 2-2-.9-2-2-2zm6 4c1.100 0 2-.9 2-2s-.9-2-2-2-2 .9-2 2 .9 2 2 2zm0 2c-1.100 0-2 .9-2 2s.9 2 2 2 2-.9 2-2-.9-2-2-2zm0 6c-1.100 0-2 .9-2 2s.9 2 2 2 2-.9 2-2-.9-2-2-2z"/></svg></div>
<div class="abs" style="left:29.599999999999994px;top:405.4px"><svg viewBox="0 0 24 24" width="16" height="16" fill="#9a9a9a"><path d="M17 7H7c-2.76 0-5 2.24-5 5s2.24 5 5 5h10c2.760 0 5-2.240 5-5s-2.240-5-5-5zM7 15c-1.660 0-3-1.340-3-3s1.340-3 3-3 3 1.340 3 3-1.340 3-3 3z"/></svg></div>
<div class="t" style="left:53px;top:405.9px;font-size:14.5px;color:#111">is_silenced</div>
<div class="abs" style="left:10.400000000000006px;top:435.9px"><svg viewBox="0 0 24 24" width="16" height="16" fill="#c6c6c6"><path d="M11 18c0 1.100-.9 2-2 2s-2-.9-2-2 .9-2 2-2 2 .9 2 2zm-2-8c-1.100 0-2 .9-2 2s.9 2 2 2 2-.9 2-2-.9-2-2-2zm0-6c-1.100 0-2 .9-2 2s.9 2 2 2 2-.9 2-2-.9-2-2-2zm6 4c1.100 0 2-.9 2-2s-.9-2-2-2-2 .9-2 2 .9 2 2 2zm0 2c-1.100 0-2 .9-2 2s.9 2 2 2 2-.9 2-2-.9-2-2-2zm0 6c-1.100 0-2 .9-2 2s.9 2 2 2 2-.9 2-2-.9-2-2-2z"/></svg></div>
<div class="abs" style="left:29.349999999999994px;top:435.9px"><svg viewBox="0 0 24 24" width="16.5" height="16.5" fill="#9a9a9a"><path d="M2.5 4v3h5v12h3V7h5V4h-13zm19 5h-9v3h3v7h3v-7h3V9z"/></svg></div>
<div class="t" style="left:53px;top:436.6px;font-size:14.5px;color:#111">key</div>
<div class="abs" style="left:10.400000000000006px;top:466.7px"><svg viewBox="0 0 24 24" width="16" height="16" fill="#c6c6c6"><path d="M11 18c0 1.100-.9 2-2 2s-2-.9-2-2 .9-2 2-2 2 .9 2 2zm-2-8c-1.100 0-2 .9-2 2s.9 2 2 2 2-.9 2-2-.9-2-2-2zm0-6c-1.100 0-2 .9-2 2s.9 2 2 2 2-.9 2-2-.9-2-2-2zm6 4c1.100 0 2-.9 2-2s-.9-2-2-2-2 .9-2 2 .9 2 2 2zm0 2c-1.100 0-2 .9-2 2s.9 2 2 2 2-.9 2-2-.9-2-2-2zm0 6c-1.100 0-2 .9-2 2s.9 2 2 2 2-.9 2-2-.9-2-2-2z"/></svg></div>
<div class="abs" style="left:29.349999999999994px;top:466.7px"><svg viewBox="0 0 24 24" width="16.5" height="16.5" fill="#9a9a9a"><path d="M2.5 4v3h5v12h3V7h5V4h-13zm19 5h-9v3h3v7h3v-7h3V9z"/></svg></div>
<div class="t" style="left:53px;top:467.4px;font-size:14.5px;color:#111">module</div>
<div class="abs" style="left:10.400000000000006px;top:497.5px"><svg viewBox="0 0 24 24" width="16" height="16" fill="#c6c6c6"><path d="M11 18c0 1.100-.9 2-2 2s-2-.9-2-2 .9-2 2-2 2 .9 2 2zm-2-8c-1.100 0-2 .9-2 2s.9 2 2 2 2-.9 2-2-.9-2-2-2zm0-6c-1.100 0-2 .9-2 2s.9 2 2 2 2-.9 2-2-.9-2-2-2zm6 4c1.100 0 2-.9 2-2s-.9-2-2-2-2 .9-2 2 .9 2 2 2zm0 2c-1.100 0-2 .9-2 2s.9 2 2 2 2-.9 2-2-.9-2-2-2zm0 6c-1.100 0-2 .9-2 2s.9 2 2 2 2-.9 2-2-.9-2-2-2z"/></svg></div>
<div class="abs" style="left:29.349999999999994px;top:497.5px"><svg viewBox="0 0 24 24" width="16.5" height="16.5" fill="#9a9a9a"><path d="M20 10V8h-4V4h-2v4h-4V4H8v4H4v2h4v4H4v2h4v4h2v-4h4v4h2v-4h4v-2h-4v-4h4zm-6 4h-4v-4h4v4z"/></svg></div>
<div class="t" style="left:53px;top:498.2px;font-size:14.5px;color:#111">next_run_at</div>
<div class="abs" style="left:10.400000000000006px;top:528.3px"><svg viewBox="0 0 24 24" width="16" height="16" fill="#c6c6c6"><path d="M11 18c0 1.100-.9 2-2 2s-2-.9-2-2 .9-2 2-2 2 .9 2 2zm-2-8c-1.100 0-2 .9-2 2s.9 2 2 2 2-.9 2-2-.9-2-2-2zm0-6c-1.100 0-2 .9-2 2s.9 2 2 2 2-.9 2-2-.9-2-2-2zm6 4c1.100 0 2-.9 2-2s-.9-2-2-2-2 .9-2 2 .9 2 2 2zm0 2c-1.100 0-2 .9-2 2s.9 2 2 2 2-.9 2-2-.9-2-2-2zm0 6c-1.100 0-2 .9-2 2s.9 2 2 2 2-.9 2-2-.9-2-2-2z"/></svg></div>
<div class="abs" style="left:29.349999999999994px;top:528.2px"><svg viewBox="0 0 24 24" width="16.5" height="16.5" fill="#9a9a9a"><path d="M2.5 4v3h5v12h3V7h5V4h-13zm19 5h-9v3h3v7h3v-7h3V9z"/></svg></div>
<div class="t" style="left:53px;top:529.0px;font-size:14.5px;color:#111">org</div>
<div class="abs" style="left:10.400000000000006px;top:559.1px"><svg viewBox="0 0 24 24" width="16" height="16" fill="#c6c6c6"><path d="M11 18c0 1.100-.9 2-2 2s-2-.9-2-2 .9-2 2-2 2 .9 2 2zm-2-8c-1.100 0-2 .9-2 2s.9 2 2 2 2-.9 2-2-.9-2-2-2zm0-6c-1.100 0-2 .9-2 2s.9 2 2 2 2-.9 2-2-.9-2-2-2zm6 4c1.100 0 2-.9 2-2s-.9-2-2-2-2 .9-2 2 .9 2 2 2zm0 2c-1.100 0-2 .9-2 2s.9 2 2 2 2-.9 2-2-.9-2-2-2zm0 6c-1.100 0-2 .9-2 2s.9 2 2 2 2-.9 2-2-.9-2-2-2z"/></svg></div>
<div class="abs" style="left:29.349999999999994px;top:559.0px"><svg viewBox="0 0 24 24" width="16.5" height="16.5" fill="#9a9a9a"><path d="M20 10V8h-4V4h-2v4h-4V4H8v4H4v2h4v4H4v2h4v4h2v-4h4v4h2v-4h4v-2h-4v-4h4zm-6 4h-4v-4h4v4z"/></svg></div>
<div class="t" style="left:53px;top:559.8px;font-size:14.5px;color:#111">query_took</div>
<div class="abs" style="left:10.400000000000006px;top:589.8px"><svg viewBox="0 0 24 24" width="16" height="16" fill="#c6c6c6"><path d="M11 18c0 1.100-.9 2-2 2s-2-.9-2-2 .9-2 2-2 2 .9 2 2zm-2-8c-1.100 0-2 .9-2 2s.9 2 2 2 2-.9 2-2-.9-2-2-2zm0-6c-1.100 0-2 .9-2 2s.9 2 2 2 2-.9 2-2-.9-2-2-2zm6 4c1.100 0 2-.9 2-2s-.9-2-2-2-2 .9-2 2 .9 2 2 2zm0 2c-1.100 0-2 .9-2 2s.9 2 2 2 2-.9 2-2-.9-2-2-2zm0 6c-1.100 0-2 .9-2 2s.9 2 2 2 2-.9 2-2-.9-2-2-2z"/></svg></div>
<div class="abs" style="left:29.349999999999994px;top:589.8px"><svg viewBox="0 0 24 24" width="16.5" height="16.5" fill="#9a9a9a"><path d="M20 10V8h-4V4h-2v4h-4V4H8v4H4v2h4v4H4v2h4v4h2v-4h4v4h2v-4h4v-2h-4v-4h4zm-6 4h-4v-4h4v4z"/></svg></div>
<div class="t" style="left:53px;top:590.5px;font-size:14.5px;color:#111">retries</div>
<div class="abs" style="left:10.400000000000006px;top:620.6px"><svg viewBox="0 0 24 24" width="16" height="16" fill="#c6c6c6"><path d="M11 18c0 1.100-.9 2-2 2s-2-.9-2-2 .9-2 2-2 2 .9 2 2zm-2-8c-1.100 0-2 .9-2 2s.9 2 2 2 2-.9 2-2-.9-2-2-2zm0-6c-1.100 0-2 .9-2 2s.9 2 2 2 2-.9 2-2-.9-2-2-2zm6 4c1.100 0 2-.9 2-2s-.9-2-2-2-2 .9-2 2 .9 2 2 2zm0 2c-1.100 0-2 .9-2 2s.9 2 2 2 2-.9 2-2-.9-2-2-2zm0 6c-1.100 0-2 .9-2 2s.9 2 2 2 2-.9 2-2-.9-2-2-2z"/></svg></div>
<div class="abs" style="left:29.349999999999994px;top:620.6px"><svg viewBox="0 0 24 24" width="16.5" height="16.5" fill="#9a9a9a"><path d="M2.5 4v3h5v12h3V7h5V4h-13zm19 5h-9v3h3v7h3v-7h3V9z"/></svg></div>
<div class="t" style="left:53px;top:621.3px;font-size:14.5px;color:#111">source_node</div>
<div class="abs" style="left:10.400000000000006px;top:651.4px"><svg viewBox="0 0 24 24" width="16" height="16" fill="#c6c6c6"><path d="M11 18c0 1.100-.9 2-2 2s-2-.9-2-2 .9-2 2-2 2 .9 2 2zm-2-8c-1.100 0-2 .9-2 2s.9 2 2 2 2-.9 2-2-.9-2-2-2zm0-6c-1.100 0-2 .9-2 2s.9 2 2 2 2-.9 2-2-.9-2-2-2zm6 4c1.100 0 2-.9 2-2s-.9-2-2-2-2 .9-2 2 .9 2 2 2zm0 2c-1.100 0-2 .9-2 2s.9 2 2 2 2-.9 2-2-.9-2-2-2zm0 6c-1.100 0-2 .9-2 2s.9 2 2 2 2-.9 2-2-.9-2-2-2z"/></svg></div>
<div class="abs" style="left:29.349999999999994px;top:651.4px"><svg viewBox="0 0 24 24" width="16.5" height="16.5" fill="#9a9a9a"><path d="M20 10V8h-4V4h-2v4h-4V4H8v4H4v2h4v4H4v2h4v4h2v-4h4v4h2v-4h4v-2h-4v-4h4zm-6 4h-4v-4h4v4z"/></svg></div>
<div class="t" style="left:53px;top:652.1px;font-size:14.5px;color:#111">start_time</div>
<div class="abs" style="left:10.400000000000006px;top:682.2px"><svg viewBox="0 0 24 24" width="16" height="16" fill="#c6c6c6"><path d="M11 18c0 1.100-.9 2-2 2s-2-.9-2-2 .9-2 2-2 2 .9 2 2zm-2-8c-1.100 0-2 .9-2 2s.9 2 2 2 2-.9 2-2-.9-2-2-2zm0-6c-1.100 0-2 .9-2 2s.9 2 2 2 2-.9 2-2-.9-2-2-2zm6 4c1.100 0 2-.9 2-2s-.9-2-2-2-2 .9-2 2 .9 2 2 2zm0 2c-1.100 0-2 .9-2 2s.9 2 2 2 2-.9 2-2-.9-2-2-2zm0 6c-1.100 0-2 .9-2 2s.9 2 2 2 2-.9 2-2-.9-2-2-2z"/></svg></div>
<div class="abs" style="left:29.349999999999994px;top:682.1px"><svg viewBox="0 0 24 24" width="16.5" height="16.5" fill="#9a9a9a"><path d="M2.5 4v3h5v12h3V7h5V4h-13zm19 5h-9v3h3v7h3v-7h3V9z"/></svg></div>
<div class="t" style="left:53px;top:682.9px;font-size:14.5px;color:#111">status</div>
<div class="abs" style="left:10.400000000000006px;top:713.0px"><svg viewBox="0 0 24 24" width="16" height="16" fill="#c6c6c6"><path d="M11 18c0 1.100-.9 2-2 2s-2-.9-2-2 .9-2 2-2 2 .9 2 2zm-2-8c-1.100 0-2 .9-2 2s.9 2 2 2 2-.9 2-2-.9-2-2-2zm0-6c-1.100 0-2 .9-2 2s.9 2 2 2 2-.9 2-2-.9-2-2-2zm6 4c1.100 0 2-.9 2-2s-.9-2-2-2-2 .9-2 2 .9 2 2 2zm0 2c-1.100 0-2 .9-2 2s.9 2 2 2 2-.9 2-2-.9-2-2-2zm0 6c-1.100 0-2 .9-2 2s.9 2 2 2 2-.9 2-2-.9-2-2-2z"/></svg></div>
<div class="abs" style="left:29.349999999999994px;top:712.9px"><svg viewBox="0 0 24 24" width="16.5" height="16.5" fill="#9a9a9a"><path d="M2.5 4v3h5v12h3V7h5V4h-13zm19 5h-9v3h3v7h3v-7h3V9z"/></svg></div>
<div class="t" style="left:53px;top:713.7px;font-size:14.5px;color:#111">success_response</div>
<div class="abs" style="left:10.400000000000006px;top:743.7px"><svg viewBox="0 0 24 24" width="16" height="16" fill="#c6c6c6"><path d="M11 18c0 1.100-.9 2-2 2s-2-.9-2-2 .9-2 2-2 2 .9 2 2zm-2-8c-1.100 0-2 .9-2 2s.9 2 2 2 2-.9 2-2-.9-2-2-2zm0-6c-1.100 0-2 .9-2 2s.9 2 2 2 2-.9 2-2-.9-2-2-2zm6 4c1.100 0 2-.9 2-2s-.9-2-2-2-2 .9-2 2 .9 2 2 2zm0 2c-1.100 0-2 .9-2 2s.9 2 2 2 2-.9 2-2-.9-2-2-2zm0 6c-1.100 0-2 .9-2 2s.9 2 2 2 2-.9 2-2-.9-2-2-2z"/></svg></div>
<div class="abs" style="left:29.349999999999994px;top:743.7px"><svg viewBox="0 0 24 24" width="16.5" height="16.5" fill="#9a9a9a"><path d="M2.5 4v3h5v12h3V7h5V4h-13zm19 5h-9v3h3v7h3v-7h3V9z"/></svg></div>
<div class="t" style="left:53px;top:744.4px;font-size:14.5px;color:#111">trigger_trace_id</div>
</div>
<div class="abs" style="left:536px;top:56px;width:1.5px;height:932px;background:#e0e0e0"></div>
<div class="abs" style="left:521.500px;top:55.500px;width:22px;height:22px;border-radius:50%;background:#5960b3"></div>
<div class="abs" style="left:527.5px;top:61.5px"><svg viewBox="0 0 24 24" width="10" height="10" fill="#fff"><path d="M11 18c0 1.100-.9 2-2 2s-2-.9-2-2 .9-2 2-2 2 .9 2 2zm-2-8c-1.100 0-2 .9-2 2s.9 2 2 2 2-.9 2-2-.9-2-2-2zm0-6c-1.100 0-2 .9-2 2s.9 2 2 2 2-.9 2-2-.9-2-2-2zm6 4c1.100 0 2-.9 2-2s-.9-2-2-2-2 .9-2 2 .9 2 2 2zm0 2c-1.100 0-2 .9-2 2s.9 2 2 2 2-.9 2-2-.9-2-2-2zm0 6c-1.100 0-2 .9-2 2s.9 2 2 2 2-.9 2-2-.9-2-2-2z"/></svg></div>
<div class="abs" style="left:537px;top:96px;width:1040px;height:1px;background:#e0e0e0"></div>
<div class="abs" style="left:537px;top:137px;width:1040px;height:2px;background:#e2e2e2"></div>
<div class="abs" style="left:537px;top:176px;width:1040px;height:1px;background:#e0e0e0"></div>
<div class="abs" style="left:1083px;top:56px;width:1.5px;height:39px;background:#dcdcdc"></div>
<div class="t" style="left:555px;top:68px;font-size:15.500px;color:#111;letter-spacing:.05px">X-Axis (Row)</div>
<div class="abs" style="left:651px;top:68.500px"><svg viewBox="0 0 24 24" width="14" height="14" fill="#111"><path d="M11 7h2v2h-2zm0 4h2v6h-2zm1-9C6.48 2 2 6.48 2 12s4.48 10 10 10 10-4.48 10-10S17.52 2 12 2zm0 18c-4.41 0-8-3.59-8-8s3.59-8 8-8 8 3.59 8 8-3.59 8-8 8z"/></svg></div>
<div class="t" style="left:700px;top:68px;font-size:15.500px;color:#111">:</div>
<div class="abs" style="left:708px;top:62px;width:203px;height:27px;border:1px solid #cfcfcf;border-radius:5px;background:#fff"></div>
<div class="abs" style="left:708.8px;top:68px"><svg viewBox="0 0 24 24" width="14.5" height="14.5" fill="#c4c4c4"><path d="M11 18c0 1.100-.9 2-2 2s-2-.9-2-2 .9-2 2-2 2 .9 2 2zm-2-8c-1.100 0-2 .9-2 2s.9 2 2 2 2-.9 2-2-.9-2-2-2zm0-6c-1.100 0-2 .9-2 2s.9 2 2 2 2-.9 2-2-.9-2-2-2zm6 4c1.100 0 2-.9 2-2s-.9-2-2-2-2 .9-2 2 .9 2 2 2zm0 2c-1.100 0-2 .9-2 2s.9 2 2 2 2-.9 2-2-.9-2-2-2zm0 6c-1.100 0-2 .9-2 2s.9 2 2 2 2-.9 2-2-.9-2-2-2z"/></svg></div>
<div class="abs" style="left:723px;top:63px;width:167px;height:25px;background:#5960b3"></div>
<div class="t" style="left:732px;top:69px;font-size:11.5px;color:#fff;letter-spacing:-.33px">HISTOGRAM(_timestamp)</div>
<div class="abs" style="left:866px;top:64px"><svg viewBox="0 0 24 24" width="23" height="23" fill="#fff"><path d="M7 10l5 5 5-5z"/></svg></div>
<div class="abs" style="left:892px;top:67.5px"><svg viewBox="0 0 24 24" width="16" height="16" fill="#111"><path d="M19 6.41L17.59 5 12 10.59 6.41 5 5 6.41 10.59 12 5 17.59 6.41 19 12 13.41 17.59 19 19 17.59 13.41 12z"/></svg></div>
<div class="t" style="left:1102px;top:68px;font-size:15.500px;color:#111">Breakdown</div>
<div class="abs" style="left:1185.500px;top:68.500px"><svg viewBox="0 0 24 24" width="14" height="14" fill="#111"><path d="M11 7h2v2h-2zm0 4h2v6h-2zm1-9C6.48 2 2 6.48 2 12s4.48 10 10 10 10-4.48 10-10S17.52 2 12 2zm0 18c-4.41 0-8-3.59-8-8s3.59-8 8-8 8 3.59 8 8-3.59 8-8 8z"/></svg></div>
<div class="t" style="left:1203px;top:68px;font-size:15.500px;color:#111">:</div>
<div class="t" style="left:1325px;top:71px;font-size:13.500px;font-weight:bold;color:#111;letter-spacing:.22px">Add 0 or 1 field here</div>
<div class="t" style="left:555px;top:109px;font-size:15.500px;color:#111;letter-spacing:-.1px">Y-Axis (Columns)</div>
<div class="abs" style="left:678.500px;top:109.500px"><svg viewBox="0 0 24 24" width="14" height="14" fill="#111"><path d="M11 7h2v2h-2zm0 4h2v6h-2zm1-9C6.48 2 2 6.48 2 12s4.48 10 10 10 10-4.48 10-10S17.52 2 12 2zm0 18c-4.41 0-8-3.59-8-8s3.59-8 8-8 8 3.59 8 8-3.59 8-8 8z"/></svg></div>
<div class="t" style="left:700px;top:109px;font-size:15.500px;color:#111">:</div>
<div class="abs" style="left:708px;top:103px;width:143px;height:27px;border:1px solid #cfcfcf;border-radius:5px;background:#fff"></div>
<div class="abs" style="left:708.8px;top:109px"><svg viewBox="0 0 24 24" width="14.5" height="14.5" fill="#c4c4c4"><path d="M11 18c0 1.100-.9 2-2 2s-2-.9-2-2 .9-2 2-2 2 .9 2 2zm-2-8c-1.100 0-2 .9-2 2s.9 2 2 2 2-.9 2-2-.9-2-2-2zm0-6c-1.100 0-2 .9-2 2s.9 2 2 2 2-.9 2-2-.9-2-2-2zm6 4c1.100 0 2-.9 2-2s-.9-2-2-2-2 .9-2 2 .9 2 2 2zm0 2c-1.100 0-2 .9-2 2s.9 2 2 2 2-.9 2-2-.9-2-2-2zm0 6c-1.100 0-2 .9-2 2s.9 2 2 2 2-.9 2-2-.9-2-2-2z"/></svg></div>
<div class="abs" style="left:723px;top:104px;width:106px;height:25px;background:#5960b3"></div>
<div class="t" style="left:732px;top:110px;font-size:11.5px;color:#fff;letter-spacing:-.33px">COUNT(error)</div>
<div class="abs" style="left:805px;top:105px"><svg viewBox="0 0 24 24" width="23" height="23" fill="#fff"><path d="M7 10l5 5 5-5z"/></svg></div>
<div class="abs" style="left:831px;top:108.5px"><svg viewBox="0 0 24 24" width="16" height="16" fill="#111"><path d="M19 6.41L17.59 5 12 10.59 6.41 5 5 6.41 10.59 12 5 17.59 6.41 19 12 13.41 17.59 19 19 17.59 13.41 12z"/></svg></div>
<div class="t" style="left:555px;top:150px;font-size:15.500px;color:#111">Filters</div>
<div class="t" style="left:700px;top:150px;font-size:15.500px;color:#111">:</div>
<div class="abs" style="left:717.500px;top:145px;width:25px;height:25px;border-radius:50%;background:#5960b3;box-shadow:0 1px 3px rgba(0,0,0,.3)"></div>
<div class="abs" style="left:722px;top:149.500px"><svg viewBox="0 0 24 24" width="16" height="16" fill="#fff"><path d="M19 13h-6v6h-2v-6H5v-2h6V5h2v6h6v2z"/></svg></div>
<svg class="abs" style="left:550px;top:191px" width="28" height="28" viewBox="0 0 28 28"><path d="M3.200 3.800H17.800L12.300 10.800V18.200L8.700 15.800V10.800Z" fill="none" stroke="#000" stroke-width="2" stroke-linejoin="round"/><path d="M20 14.500V23.500M15.500 19H24.500" stroke="#000" stroke-width="2" fill="none"/></svg>
<svg class="abs" style="left:1493.800px;top:234px" width="16" height="16" viewBox="0 0 16 16"><circle cx="8" cy="8" r="6.700" fill="#e9e9e9" stroke="#666" stroke-width="1.400"/><path d="M8 8.300V3.600" stroke="#e0306c" stroke-width="1.300"/><path d="M8 8.300L10.800 6.900" stroke="#222" stroke-width="1.200"/></svg>
<div class="t" style="left:1513px;top:234px;font-size:15px;color:#222;letter-spacing:.3px">35s ago</div>
<svg class="abs" style="left:0;top:0" width="1901" height="988" viewBox="0 0 1901 988" font-family="Liberation Sans, sans-serif">
<rect x="604.7" y="269.00" width="943.8" height="1" fill="#e0e6f1"/>
<text x="596" y="272.7" text-anchor="end" font-size="13.400" fill="#6e7079">3.00</text>
<rect x="604.7" y="356.00" width="943.8" height="1" fill="#e0e6f1"/>
<text x="596" y="359.7" text-anchor="end" font-size="13.400" fill="#6e7079">2.50</text>
<rect x="604.7" y="443.00" width="943.8" height="1" fill="#e0e6f1"/>
<text x="596" y="446.7" text-anchor="end" font-size="13.400" fill="#6e7079">2.00</text>
<rect x="604.7" y="530.00" width="943.8" height="1" fill="#e0e6f1"/>
<text x="596" y="533.7" text-anchor="end" font-size="13.400" fill="#6e7079">1.50</text>
<rect x="604.7" y="617.00" width="943.8" height="1" fill="#e0e6f1"/>
<text x="596" y="620.7" text-anchor="end" font-size="13.400" fill="#6e7079">1.00</text>
<rect x="604.7" y="704.00" width="943.8" height="1" fill="#e0e6f1"/>
<text x="596" y="707.7" text-anchor="end" font-size="13.400" fill="#6e7079">0.50</text>
<rect x="604.7" y="791.00" width="943.8" height="1" fill="#e0e6f1"/>
<text x="596" y="794.7" text-anchor="end" font-size="13.400" fill="#6e7079">0.00</text>
<rect x="604.20" y="269.5" width="1" height="522.0" fill="#e0e6f1"/>
<rect x="1548.00" y="269.5" width="1" height="522.0" fill="#e0e6f1"/>
<rect x="701.40" y="269.5" width="1" height="522.0" fill="#e0e6f1"/>
<rect x="826.20" y="269.5" width="1" height="522.0" fill="#e0e6f1"/>
<rect x="951.00" y="269.5" width="1" height="522.0" fill="#e0e6f1"/>
<rect x="1075.80" y="269.5" width="1" height="522.0" fill="#e0e6f1"/>
<rect x="1200.60" y="269.5" width="1" height="522.0" fill="#e0e6f1"/>
<rect x="1325.40" y="269.5" width="1" height="522.0" fill="#e0e6f1"/>
<rect x="1450.20" y="269.5" width="1" height="522.0" fill="#e0e6f1"/>
<text x="701.9" y="812" text-anchor="middle" font-size="13.400" fill="#6e7079">13:44</text>
<text x="826.7" y="812" text-anchor="middle" font-size="13.400" fill="#6e7079">13:46</text>
<text x="951.5" y="812" text-anchor="middle" font-size="13.400" fill="#6e7079">13:48</text>
<text x="1076.3" y="812" text-anchor="middle" font-size="13.400" fill="#6e7079">13:50</text>
<text x="1201.1" y="812" text-anchor="middle" font-size="13.400" fill="#6e7079">13:52</text>
<text x="1325.9" y="812" text-anchor="middle" font-size="13.400" fill="#6e7079">13:54</text>
<text x="1450.7" y="812" text-anchor="middle" font-size="13.400" fill="#6e7079">13:56</text>
<rect x="608.65" y="617.50" width="3.5" height="174.00" fill="#fdd75f"/>
<rect x="614.85" y="617.50" width="3.5" height="174.00" fill="#3ba0d9"/>
<rect x="619.05" y="617.50" width="3.5" height="174.00" fill="#fdd75f"/>
<rect x="625.25" y="443.50" width="3.5" height="348.00" fill="#3ba0d9"/>
<rect x="629.45" y="617.50" width="3.5" height="174.00" fill="#fdd75f"/>
<rect x="635.65" y="617.50" width="3.5" height="174.00" fill="#3ba0d9"/>
<rect x="639.85" y="617.50" width="3.5" height="174.00" fill="#fdd75f"/>
<rect x="646.05" y="617.50" width="3.5" height="174.00" fill="#3ba0d9"/>
<rect x="650.25" y="617.50" width="3.5" height="174.00" fill="#fdd75f"/>
<rect x="666.85" y="443.50" width="3.5" height="348.00" fill="#3ba0d9"/>
<rect x="687.65" y="617.50" width="3.5" height="174.00" fill="#3ba0d9"/>
<rect x="691.85" y="617.50" width="3.5" height="174.00" fill="#fdd75f"/>
<rect x="702.25" y="443.50" width="3.5" height="348.00" fill="#fdd75f"/>
<rect x="712.65" y="443.50" width="3.5" height="348.00" fill="#fdd75f"/>
<rect x="723.05" y="617.50" width="3.5" height="174.00" fill="#fdd75f"/>
<rect x="729.25" y="617.50" width="3.5" height="174.00" fill="#3ba0d9"/>
<rect x="733.45" y="617.50" width="3.5" height="174.00" fill="#fdd75f"/>
<rect x="739.65" y="617.50" width="3.5" height="174.00" fill="#3ba0d9"/>
<rect x="743.85" y="617.50" width="3.5" height="174.00" fill="#fdd75f"/>
<rect x="750.05" y="269.50" width="3.5" height="522.00" fill="#3ba0d9"/>
<rect x="754.25" y="617.50" width="3.5" height="174.00" fill="#fdd75f"/>
<rect x="760.45" y="617.50" width="3.5" height="174.00" fill="#3ba0d9"/>
<rect x="764.65" y="617.50" width="3.5" height="174.00" fill="#fdd75f"/>
<rect x="775.05" y="617.50" width="3.5" height="174.00" fill="#fdd75f"/>
<rect x="781.25" y="443.50" width="3.5" height="348.00" fill="#3ba0d9"/>
<rect x="785.45" y="443.50" width="3.5" height="348.00" fill="#fdd75f"/>
<rect x="791.65" y="617.50" width="3.5" height="174.00" fill="#3ba0d9"/>
<rect x="795.85" y="617.50" width="3.5" height="174.00" fill="#fdd75f"/>
<rect x="802.05" y="617.50" width="3.5" height="174.00" fill="#3ba0d9"/>
<rect x="806.25" y="617.50" width="3.5" height="174.00" fill="#fdd75f"/>
<rect x="812.45" y="443.50" width="3.5" height="348.00" fill="#3ba0d9"/>
<rect x="816.65" y="617.50" width="3.5" height="174.00" fill="#fdd75f"/>
<rect x="822.85" y="443.50" width="3.5" height="348.00" fill="#3ba0d9"/>
<rect x="827.05" y="617.50" width="3.5" height="174.00" fill="#fdd75f"/>
<rect x="833.25" y="617.50" width="3.5" height="174.00" fill="#3ba0d9"/>
<rect x="837.45" y="617.50" width="3.5" height="174.00" fill="#fdd75f"/>
<rect x="843.65" y="443.50" width="3.5" height="348.00" fill="#3ba0d9"/>
<rect x="864.45" y="617.50" width="3.5" height="174.00" fill="#3ba0d9"/>
<rect x="879.05" y="617.50" width="3.5" height="174.00" fill="#fdd75f"/>
<rect x="889.45" y="617.50" width="3.5" height="174.00" fill="#fdd75f"/>
<rect x="899.85" y="617.50" width="3.5" height="174.00" fill="#fdd75f"/>
<rect x="916.45" y="617.50" width="3.5" height="174.00" fill="#3ba0d9"/>
<rect x="926.85" y="617.50" width="3.5" height="174.00" fill="#3ba0d9"/>
<rect x="937.25" y="617.50" width="3.5" height="174.00" fill="#3ba0d9"/>
<rect x="958.05" y="617.50" width="3.5" height="174.00" fill="#3ba0d9"/>
<rect x="968.45" y="617.50" width="3.5" height="174.00" fill="#3ba0d9"/>
<rect x="972.65" y="617.50" width="3.5" height="174.00" fill="#fdd75f"/>
<rect x="978.85" y="617.50" width="3.5" height="174.00" fill="#3ba0d9"/>
<rect x="983.05" y="617.50" width="3.5" height="174.00" fill="#fdd75f"/>
<rect x="993.45" y="617.50" width="3.5" height="174.00" fill="#fdd75f"/>
<rect x="1010.05" y="617.50" width="3.5" height="174.00" fill="#3ba0d9"/>
<rect x="1020.45" y="617.50" width="3.5" height="174.00" fill="#3ba0d9"/>
<rect x="1030.85" y="617.50" width="3.5" height="174.00" fill="#3ba0d9"/>
<rect x="1045.45" y="617.50" width="3.5" height="174.00" fill="#fdd75f"/>
<rect x="1055.85" y="617.50" width="3.5" height="174.00" fill="#fdd75f"/>
<rect x="1066.25" y="443.50" width="3.5" height="348.00" fill="#fdd75f"/>
<rect x="1076.65" y="617.50" width="3.5" height="174.00" fill="#fdd75f"/>
<rect x="1087.05" y="443.50" width="3.5" height="348.00" fill="#fdd75f"/>
<rect x="1093.25" y="617.50" width="3.5" height="174.00" fill="#3ba0d9"/>
<rect x="1097.45" y="617.50" width="3.5" height="174.00" fill="#fdd75f"/>
<rect x="1103.65" y="443.50" width="3.5" height="348.00" fill="#3ba0d9"/>
<rect x="1107.85" y="617.50" width="3.5" height="174.00" fill="#fdd75f"/>
<rect x="1114.05" y="443.50" width="3.5" height="348.00" fill="#3ba0d9"/>
<rect x="1124.45" y="617.50" width="3.5" height="174.00" fill="#3ba0d9"/>
<rect x="1139.05" y="443.50" width="3.5" height="348.00" fill="#fdd75f"/>
<rect x="1145.25" y="617.50" width="3.5" height="174.00" fill="#3ba0d9"/>
<rect x="1149.45" y="443.50" width="3.5" height="348.00" fill="#fdd75f"/>
<rect x="1155.65" y="617.50" width="3.5" height="174.00" fill="#3ba0d9"/>
<rect x="1159.85" y="269.50" width="3.5" height="522.00" fill="#fdd75f"/>
<rect x="1170.25" y="617.50" width="3.5" height="174.00" fill="#fdd75f"/>
<rect x="1176.45" y="443.50" width="3.5" height="348.00" fill="#3ba0d9"/>
<rect x="1180.65" y="617.50" width="3.5" height="174.00" fill="#fdd75f"/>
<rect x="1186.85" y="443.50" width="3.5" height="348.00" fill="#3ba0d9"/>
<rect x="1197.25" y="443.50" width="3.5" height="348.00" fill="#3ba0d9"/>
<rect x="1207.65" y="443.50" width="3.5" height="348.00" fill="#3ba0d9"/>
<rect x="1211.85" y="443.50" width="3.5" height="348.00" fill="#fdd75f"/>
<rect x="1218.05" y="269.50" width="3.5" height="522.00" fill="#3ba0d9"/>
<rect x="1222.25" y="443.50" width="3.5" height="348.00" fill="#fdd75f"/>
<rect x="1228.45" y="443.50" width="3.5" height="348.00" fill="#3ba0d9"/>
<rect x="1232.65" y="269.50" width="3.5" height="522.00" fill="#fdd75f"/>
<rect x="1243.05" y="617.50" width="3.5" height="174.00" fill="#fdd75f"/>
<rect x="1253.45" y="443.50" width="3.5" height="348.00" fill="#fdd75f"/>
<rect x="1263.85" y="617.50" width="3.5" height="174.00" fill="#fdd75f"/>
<rect x="1274.25" y="617.50" width="3.5" height="174.00" fill="#fdd75f"/>
<rect x="1284.65" y="617.50" width="3.5" height="174.00" fill="#fdd75f"/>
<rect x="1290.85" y="617.50" width="3.5" height="174.00" fill="#3ba0d9"/>
<rect x="1295.05" y="617.50" width="3.5" height="174.00" fill="#fdd75f"/>
<rect x="1301.25" y="443.50" width="3.5" height="348.00" fill="#3ba0d9"/>
<rect x="1305.45" y="617.50" width="3.5" height="174.00" fill="#fdd75f"/>
<rect x="1311.65" y="443.50" width="3.5" height="348.00" fill="#3ba0d9"/>
<rect x="1322.05" y="617.50" width="3.5" height="174.00" fill="#3ba0d9"/>
<rect x="1332.45" y="617.50" width="3.5" height="174.00" fill="#3ba0d9"/>
<rect x="1347.05" y="617.50" width="3.5" height="174.00" fill="#fdd75f"/>
<rect x="1357.45" y="443.50" width="3.5" height="348.00" fill="#fdd75f"/>
<rect x="1363.65" y="617.50" width="3.5" height="174.00" fill="#3ba0d9"/>
<rect x="1367.85" y="443.50" width="3.5" height="348.00" fill="#fdd75f"/>
<rect x="1374.05" y="617.50" width="3.5" height="174.00" fill="#3ba0d9"/>
<rect x="1378.25" y="617.50" width="3.5" height="174.00" fill="#fdd75f"/>
<rect x="1384.45" y="617.50" width="3.5" height="174.00" fill="#3ba0d9"/>
<rect x="1388.65" y="617.50" width="3.5" height="174.00" fill="#fdd75f"/>
<rect x="1394.85" y="617.50" width="3.5" height="174.00" fill="#3ba0d9"/>
<rect x="1399.05" y="617.50" width="3.5" height="174.00" fill="#fdd75f"/>
<rect x="1405.25" y="617.50" width="3.5" height="174.00" fill="#3ba0d9"/>
<rect x="1409.45" y="617.50" width="3.5" height="174.00" fill="#fdd75f"/>
<rect x="1419.85" y="617.50" width="3.5" height="174.00" fill="#fdd75f"/>
<rect x="1430.25" y="617.50" width="3.5" height="174.00" fill="#fdd75f"/>
<rect x="1436.45" y="617.50" width="3.5" height="174.00" fill="#3ba0d9"/>
<rect x="1440.65" y="443.50" width="3.5" height="348.00" fill="#fdd75f"/>
<rect x="1451.05" y="617.50" width="3.5" height="174.00" fill="#fdd75f"/>
<rect x="1457.25" y="443.50" width="3.5" height="348.00" fill="#3ba0d9"/>
<rect x="1461.45" y="617.50" width="3.5" height="174.00" fill="#fdd75f"/>
<rect x="1467.65" y="617.50" width="3.5" height="174.00" fill="#3ba0d9"/>
<rect x="1471.85" y="617.50" width="3.5" height="174.00" fill="#fdd75f"/>
<rect x="1478.05" y="617.50" width="3.5" height="174.00" fill="#3ba0d9"/>
<rect x="1482.25" y="617.50" width="3.5" height="174.00" fill="#fdd75f"/>
<rect x="1492.65" y="617.50" width="3.5" height="174.00" fill="#fdd75f"/>
<rect x="1534.25" y="617.50" width="3.5" height="174.00" fill="#fdd75f"/>
<text x="1076" y="831" text-anchor="middle" font-size="16.400" font-weight="bold" fill="#666a73">Timestamp</text>
<text transform="translate(565.300,530.200) rotate(-90)" text-anchor="middle" font-size="16" font-weight="bold" fill="#666a73">Error</text>
<rect x="548.2" y="844.2" width="26.800" height="14.800" rx="3.500" fill="#3ba0d9"/>
<text x="581" y="855.800" font-size="13.700" fill="#555">Error</text>
<rect x="622.9" y="844.2" width="27.100" height="14.800" rx="3.500" fill="#fdd75f"/>
<text x="656" y="855.800" font-size="13.500" fill="#555">Error (2 Days ...</text>
</svg>
<div class="abs" style="left:537px;top:873px;width:1040px;height:44px;background:#cccccc"></div>
<div class="abs" style="left:547px;top:883px"><svg viewBox="0 0 24 24" width="24" height="24" fill="#000"><path d="M7 10l5 5 5-5z"/></svg></div>
<div class="t" style="left:577px;top:887px;font-size:15.500px;font-weight:bold;color:#000">Query</div>
<div class="abs" style="left:1362px;top:889px;width:20px;height:10.500px;border-radius:6px;background:#818181"></div>
<div class="abs" style="left:1355.500px;top:887px;width:15.500px;height:15.500px;border-radius:50%;background:#fafafa;box-shadow:0 1px 2px rgba(0,0,0,.4)"></div>
<div class="t" style="left:1359px;top:890.500px;font-size:8.500px;font-style:italic;color:#777">fx</div>
<div class="abs" style="left:1396px;top:879px;width:168px;height:32px;border:1px solid #8a8a8a;border-radius:9px;background:#f0eaea;overflow:hidden"><div style="position:absolute;left:0;top:0;width:56.500px;height:30px;background:#5960b3"></div></div>
<div class="t" style="left:1397px;width:57px;text-align:center;top:887px;font-size:15.500px;font-weight:bold;color:#fff;letter-spacing:-.2px">Auto</div>
<div class="t" style="left:1465px;top:887px;font-size:15.500px;color:#111;letter-spacing:-.2px">Custom SQL</div>
<div class="abs" style="left:537px;top:917px;width:1040px;height:71px;background:#fafafa"></div>
<div class="abs" style="left:1547px;top:917px;width:14.500px;height:71px;background:#bcbcbc"></div>
<div class="t" style="left:537.500px;top:921px;font-family:'Liberation Mono',monospace;font-size:14px;white-space:pre;letter-spacing:.068px;color:#1a1a8a">1</div>
<div class="t" style="left:562px;top:921px;font-family:'Liberation Mono',monospace;font-size:14px;white-space:pre;letter-spacing:.068px;color:#000"><span style="color:#0000ff">SELECT</span> histogram<span style="color:#0431fa">(</span>_timestamp<span style="color:#0431fa">)</span> <span style="color:#0000ff">as</span> "x_axis_1", <span style="color:#c700c7">count</span><span style="color:#0431fa">(</span>error<span style="color:#0431fa">)</span> <span style="color:#0000ff">as</span> "y_axis_1"  <span style="color:#0000ff">FROM</span> "triggers"  <span style="color:#0000ff">GROUP BY</span> x_axis_1 <span style="color:#0000ff">ORDER BY</span></div>
<div class="t" style="left:562px;top:942.300px;font-family:'Liberation Mono',monospace;font-size:14px;white-space:pre;letter-spacing:.068px;color:#000">x_axis_1 <span style="color:#0000ff">ASC</span></div>
<div class="abs" style="left:1577px;top:56px;width:1px;height:932px;background:#dcdcdc"></div>
<div class="t" style="left:1589px;top:80.500px;font-size:15px;font-weight:bold;color:#000;letter-spacing:-.1px">Config</div>
<div class="abs" style="left:1860.500px;top:72.500px;width:39.500px;height:32.500px;border:1px solid #dcdcdc;border-radius:4px;background:#fff"></div>
<svg class="abs" style="left:1860px;top:72px" width="40" height="34" viewBox="1860 72 40 34"><path d="M1872.300 85.200L1876.200 88.800L1872.300 92.400M1888 85.200L1884.100 88.800L1888 92.400" fill="none" stroke="#000" stroke-width="2.300"/></svg>
<div class="abs" style="left:1578px;top:121px;width:323px;height:1px;background:#e0e0e0"></div>
<div class="abs" style="left:1589px;top:115px;width:302px;height:43.500px;border:1px solid #d6d6d6;border-top:none;background:#fff;clip-path:inset(7px 0 0 0)"></div>
<div class="t" style="left:1603px;top:130px;font-size:15px;color:#888">-</div>
<div class="lab" style="left:1590px;top:194px">Axis Width</div>
<div class="inp" style="left:1589px;top:216px;width:302px;height:38.500px"></div>
<div class="ph" style="left:1603.500px;top:227px">Auto</div>
<div class="abs" style="left:1603px;top:299px;width:34px;height:14px;border-radius:7px;background:#ababab"></div>
<div class="abs" style="left:1600.500px;top:296px;width:20px;height:20px;border-radius:50%;background:#fff;box-shadow:0 1px 3px rgba(0,0,0,.45)"></div>
<div class="t" style="left:1650.500px;top:298px;font-size:15.500px;color:#333;letter-spacing:.1px">Show Axis Border</div>
<div class="lab" style="left:1590px;top:342px">Y-Axis Min</div>
<div class="abs" style="left:1672.500px;top:339px"><svg viewBox="0 0 24 24" width="22" height="22" fill="#616161"><path d="M12 2C6.48 2 2 6.48 2 12s4.48 10 10 10 10-4.48 10-10S17.52 2 12 2zm1 15h-2v-6h2v6zm0-8h-2V7h2v2z"/></svg></div>
<div class="lab" style="left:1750px;top:342px">Y-Axis Max</div>
<div class="abs" style="left:1836px;top:339px"><svg viewBox="0 0 24 24" width="22" height="22" fill="#616161"><path d="M12 2C6.48 2 2 6.48 2 12s4.48 10 10 10 10-4.48 10-10S17.52 2 12 2zm1 15h-2v-6h2v6zm0-8h-2V7h2v2z"/></svg></div>
<div class="inp" style="left:1589px;top:368px;width:142px;height:39px"></div>
<div class="inp" style="left:1749px;top:368px;width:142px;height:39px"></div>
<div class="ph" style="left:1603px;top:379px">Auto</div>
<div class="ph" style="left:1763px;top:379px">Auto</div>
<div class="lab" style="left:1590px;top:441.500px">Value Position</div>
<div class="abs" style="left:1589px;top:465px;width:302px;height:38.500px;border:2px solid #cbcbcb;background:#fff"></div>
<div class="t" style="left:1603px;top:475.500px;font-size:15.500px;color:#222">None</div>
<div class="abs" style="left:1855px;top:472.500px"><svg viewBox="0 0 24 24" width="22" height="22" fill="#6a6a6a"><path d="M7 10l5 5 5-5z"/></svg></div>
<div class="lab" style="left:1590px;top:521px">Value Rotate</div>
<div class="inp" style="left:1589px;top:544px;width:302px;height:39px"></div>
<div class="t" style="left:1603px;top:554.500px;font-size:15.500px;color:#333">0</div>
<div class="t" style="left:1589px;top:617.500px;font-size:15.500px;color:#111;letter-spacing:.65px">Drilldown</div>
<div class="abs" style="left:1664px;top:616px"><svg viewBox="0 0 24 24" width="18" height="18" fill="#111"><path d="M11 7h2v2h-2zm0 4h2v6h-2zm1-9C6.48 2 2 6.48 2 12s4.48 10 10 10 10-4.48 10-10S17.52 2 12 2zm0 18c-4.41 0-8-3.59-8-8s3.59-8 8-8 8 3.59 8 8-3.59 8-8 8z"/></svg></div>
<div class="abs" style="left:1589px;top:648.500px;width:53px;height:39.500px;border:1px solid #dcdcdc;border-radius:4px;background:#fff"></div>
<div class="t" style="left:1595px;top:659.500px;font-size:15.500px;color:#222;letter-spacing:.25px">+ Add</div>
<div class="t" style="left:1589px;top:704.500px;font-size:15.500px;color:#111">MarkLines</div>
<div class="abs" style="left:1666px;top:703px"><svg viewBox="0 0 24 24" width="18" height="18" fill="#111"><path d="M11 7h2v2h-2zm0 4h2v6h-2zm1-9C6.48 2 2 6.48 2 12s4.48 10 10 10 10-4.48 10-10S17.52 2 12 2zm0 18c-4.41 0-8-3.59-8-8s3.59-8 8-8 8 3.59 8 8-3.59 8-8 8z"/></svg></div>
<div class="abs" style="left:1589px;top:735.500px;width:53px;height:39.500px;border:1px solid #dcdcdc;border-radius:4px;background:#fff"></div>
<div class="t" style="left:1595px;top:746.500px;font-size:15.500px;color:#222;letter-spacing:.25px">+ Add</div>
<div class="t" style="left:1589px;top:798.500px;font-size:15px;font-weight:bold;color:#111;letter-spacing:-.12px">Comparison Against</div>
<div class="abs" style="left:1738.500px;top:797px"><svg viewBox="0 0 24 24" width="18" height="18" fill="#111"><path d="M11 7h2v2h-2zm0 4h2v6h-2zm1-9C6.48 2 2 6.48 2 12s4.48 10 10 10 10-4.48 10-10S17.52 2 12 2zm0 18c-4.41 0-8-3.59-8-8s3.59-8 8-8 8 3.59 8 8-3.59 8-8 8z"/></svg></div>
<div class="abs" style="left:1589px;top:838px;width:198px;height:33.500px;background:#e8e8f6;border-radius:3px;border:1px solid #e0e0f0"></div>
<div class="abs" style="left:1595px;top:842.500px"><svg viewBox="0 0 24 24" width="22" height="22" fill="#555"><path d="M11.99 2C6.47 2 2 6.48 2 12s4.47 10 9.99 10C17.52 22 22 17.52 22 12S17.52 2 11.99 2zM12 20c-4.42 0-8-3.58-8-8s3.58-8 8-8 8 3.58 8 8-3.58 8-8 8zm.5-13H11v6l5.250 3.150.75-1.230-4.5-2.670z"/></svg></div>
<div class="t" style="left:1630.500px;top:847px;font-size:13.500px;color:#555;letter-spacing:.05px">0 Minutes ago</div>
<div class="abs" style="left:1728px;top:841.500px"><svg viewBox="0 0 24 24" width="24" height="24" fill="#444"><path d="M7 10l5 5 5-5z"/></svg></div>
<div class="abs" style="left:1589px;top:889px;width:198px;height:33.500px;background:#dfe0f3;border-radius:3px;border:1px solid #d4d5ea"></div>
<div class="abs" style="left:1595px;top:894.500px"><svg viewBox="0 0 24 24" width="22" height="22" fill="#000"><path d="M11.99 2C6.47 2 2 6.48 2 12s4.47 10 9.99 10C17.52 22 22 17.52 22 12S17.52 2 11.99 2zM12 20c-4.42 0-8-3.58-8-8s3.58-8 8-8 8 3.58 8 8-3.58 8-8 8zm.5-13H11v6l5.250 3.150.75-1.230-4.5-2.670z"/></svg></div>
<div class="t" style="left:1630.500px;top:899px;font-size:13.500px;color:#111;letter-spacing:-.08px">2 Days ago</div>
<div class="abs" style="left:1710px;top:893.500px"><svg viewBox="0 0 24 24" width="24" height="24" fill="#000"><path d="M7 10l5 5 5-5z"/></svg></div>
<div class="abs" style="left:1796px;top:897.500px"><svg viewBox="0 0 24 24" width="16" height="16" fill="#111"><path d="M19 6.41L17.59 5 12 10.59 6.41 5 5 6.41 10.59 12 5 17.59 6.41 19 12 13.41 17.59 19 19 17.59 13.41 12z"/></svg></div>
<div class="abs" style="left:1589px;top:941px;width:53px;height:38.500px;border:1px solid #dcdcdc;border-radius:4px;background:#fff"></div>
<div class="t" style="left:1595px;top:952px;font-size:15.500px;color:#222;letter-spacing:.25px">+ Add</div>
</body>
</html>
